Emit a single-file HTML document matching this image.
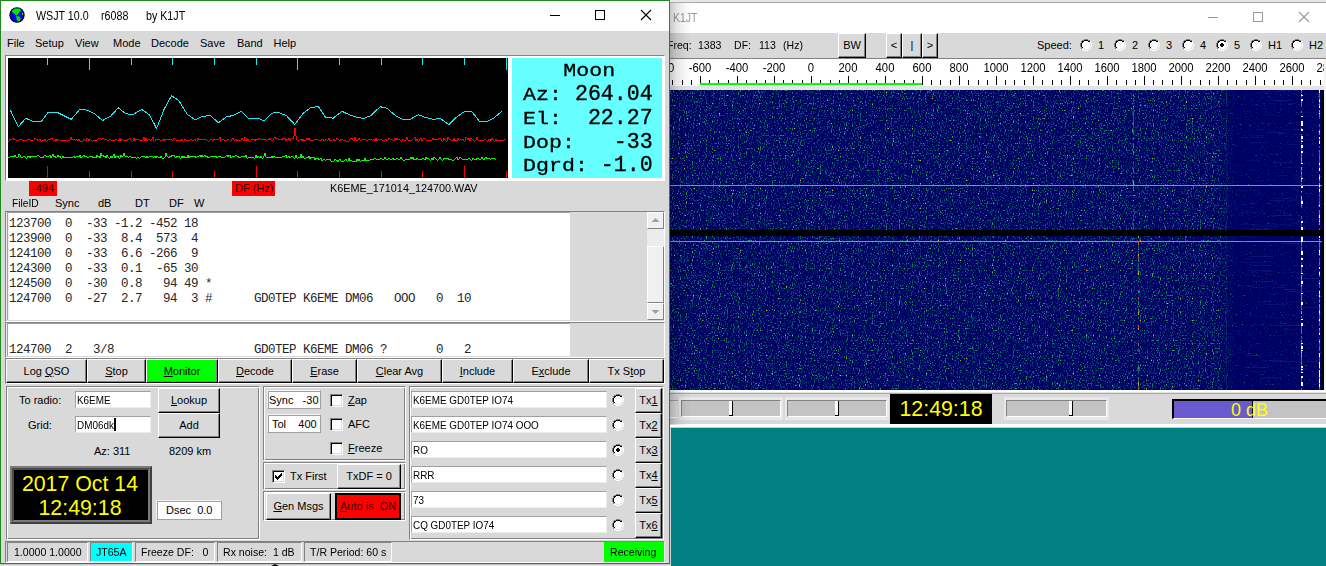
<!DOCTYPE html>
<html>
<head>
<meta charset="utf-8">
<title>WSJT</title>
<style>
*{box-sizing:border-box;margin:0;padding:0}
html,body{width:1326px;height:566px;overflow:hidden;background:#008080;font-family:"Liberation Sans",sans-serif;font-size:11px;color:#000}
.a{position:absolute}
.t{position:absolute;white-space:pre;line-height:14px;height:14px;font-size:11px}
.m{font-family:"Liberation Mono",monospace}
u{text-decoration:underline;text-underline-offset:1px}
.btn{position:absolute;background:#d9d9d9;border:1px solid;border-color:#fff #000 #000 #fff;box-shadow:inset -1px -1px 0 #828282;text-align:center;white-space:pre;font-size:11px}
.btn span{position:absolute;left:0;right:0;line-height:14px;height:14px}
.groove{position:absolute;border:1px solid;border-color:#828282 #fff #fff #828282;box-shadow:inset 1px 1px 0 #fff,inset -1px -1px 0 #828282}
.ent{position:absolute;background:#fff;border:1px solid;border-color:#a0a0a0 #ececec #ececec #a0a0a0;white-space:pre;font-size:11px}
.ent span{position:absolute;left:3px;line-height:14px;height:14px}
.cb{position:absolute;width:13px;height:13px;background:#fff;border:1px solid;border-color:#828282 #fff #fff #828282;box-shadow:inset 1px 1px 0 #000,inset -1px -1px 0 #d9d9d9}
.rb{position:absolute;width:12px;height:12px;overflow:hidden}.rb::before{content:"";position:absolute;left:-1px;top:-1px;width:1px;height:1px}.rb0::before{box-shadow:5px 1px 0 #808080,6px 1px 0 #808080,7px 1px 0 #808080,8px 1px 0 #808080,3px 2px 0 #808080,4px 2px 0 #808080,5px 2px 0 #000,6px 2px 0 #000,7px 2px 0 #000,8px 2px 0 #000,9px 2px 0 #808080,10px 2px 0 #808080,2px 3px 0 #808080,3px 3px 0 #000,4px 3px 0 #000,5px 3px 0 #fff,6px 3px 0 #fff,7px 3px 0 #fff,8px 3px 0 #fff,9px 3px 0 #000,10px 3px 0 #000,11px 3px 0 #fff,2px 4px 0 #808080,3px 4px 0 #000,4px 4px 0 #fff,5px 4px 0 #fff,6px 4px 0 #fff,7px 4px 0 #fff,8px 4px 0 #fff,9px 4px 0 #fff,10px 4px 0 #e3e3e3,11px 4px 0 #fff,1px 5px 0 #808080,2px 5px 0 #000,3px 5px 0 #fff,4px 5px 0 #fff,5px 5px 0 #fff,6px 5px 0 #fff,7px 5px 0 #fff,8px 5px 0 #fff,9px 5px 0 #fff,10px 5px 0 #fff,11px 5px 0 #e3e3e3,12px 5px 0 #fff,1px 6px 0 #808080,2px 6px 0 #000,3px 6px 0 #fff,4px 6px 0 #fff,5px 6px 0 #fff,6px 6px 0 #fff,7px 6px 0 #fff,8px 6px 0 #fff,9px 6px 0 #fff,10px 6px 0 #fff,11px 6px 0 #e3e3e3,12px 6px 0 #fff,1px 7px 0 #808080,2px 7px 0 #000,3px 7px 0 #fff,4px 7px 0 #fff,5px 7px 0 #fff,6px 7px 0 #fff,7px 7px 0 #fff,8px 7px 0 #fff,9px 7px 0 #fff,10px 7px 0 #fff,11px 7px 0 #e3e3e3,12px 7px 0 #fff,1px 8px 0 #808080,2px 8px 0 #000,3px 8px 0 #fff,4px 8px 0 #fff,5px 8px 0 #fff,6px 8px 0 #fff,7px 8px 0 #fff,8px 8px 0 #fff,9px 8px 0 #fff,10px 8px 0 #fff,11px 8px 0 #e3e3e3,12px 8px 0 #fff,2px 9px 0 #808080,3px 9px 0 #000,4px 9px 0 #fff,5px 9px 0 #fff,6px 9px 0 #fff,7px 9px 0 #fff,8px 9px 0 #fff,9px 9px 0 #fff,10px 9px 0 #e3e3e3,11px 9px 0 #fff,2px 10px 0 #808080,3px 10px 0 #e3e3e3,4px 10px 0 #e3e3e3,5px 10px 0 #fff,6px 10px 0 #fff,7px 10px 0 #fff,8px 10px 0 #fff,9px 10px 0 #e3e3e3,10px 10px 0 #e3e3e3,11px 10px 0 #fff,3px 11px 0 #fff,4px 11px 0 #fff,5px 11px 0 #e3e3e3,6px 11px 0 #e3e3e3,7px 11px 0 #e3e3e3,8px 11px 0 #e3e3e3,9px 11px 0 #fff,10px 11px 0 #fff,5px 12px 0 #fff,6px 12px 0 #fff,7px 12px 0 #fff,8px 12px 0 #fff}.rb1::before{box-shadow:5px 1px 0 #808080,6px 1px 0 #808080,7px 1px 0 #808080,8px 1px 0 #808080,3px 2px 0 #808080,4px 2px 0 #808080,5px 2px 0 #000,6px 2px 0 #000,7px 2px 0 #000,8px 2px 0 #000,9px 2px 0 #808080,10px 2px 0 #808080,2px 3px 0 #808080,3px 3px 0 #000,4px 3px 0 #000,5px 3px 0 #fff,6px 3px 0 #fff,7px 3px 0 #fff,8px 3px 0 #fff,9px 3px 0 #000,10px 3px 0 #000,11px 3px 0 #fff,2px 4px 0 #808080,3px 4px 0 #000,4px 4px 0 #fff,5px 4px 0 #fff,6px 4px 0 #fff,7px 4px 0 #fff,8px 4px 0 #fff,9px 4px 0 #fff,10px 4px 0 #e3e3e3,11px 4px 0 #fff,1px 5px 0 #808080,2px 5px 0 #000,3px 5px 0 #fff,4px 5px 0 #fff,5px 5px 0 #fff,6px 5px 0 #000,7px 5px 0 #000,8px 5px 0 #fff,9px 5px 0 #fff,10px 5px 0 #fff,11px 5px 0 #e3e3e3,12px 5px 0 #fff,1px 6px 0 #808080,2px 6px 0 #000,3px 6px 0 #fff,4px 6px 0 #fff,5px 6px 0 #000,6px 6px 0 #000,7px 6px 0 #000,8px 6px 0 #000,9px 6px 0 #fff,10px 6px 0 #fff,11px 6px 0 #e3e3e3,12px 6px 0 #fff,1px 7px 0 #808080,2px 7px 0 #000,3px 7px 0 #fff,4px 7px 0 #fff,5px 7px 0 #000,6px 7px 0 #000,7px 7px 0 #000,8px 7px 0 #000,9px 7px 0 #fff,10px 7px 0 #fff,11px 7px 0 #e3e3e3,12px 7px 0 #fff,1px 8px 0 #808080,2px 8px 0 #000,3px 8px 0 #fff,4px 8px 0 #fff,5px 8px 0 #fff,6px 8px 0 #000,7px 8px 0 #000,8px 8px 0 #fff,9px 8px 0 #fff,10px 8px 0 #fff,11px 8px 0 #e3e3e3,12px 8px 0 #fff,2px 9px 0 #808080,3px 9px 0 #000,4px 9px 0 #fff,5px 9px 0 #fff,6px 9px 0 #fff,7px 9px 0 #fff,8px 9px 0 #fff,9px 9px 0 #fff,10px 9px 0 #e3e3e3,11px 9px 0 #fff,2px 10px 0 #808080,3px 10px 0 #e3e3e3,4px 10px 0 #e3e3e3,5px 10px 0 #fff,6px 10px 0 #fff,7px 10px 0 #fff,8px 10px 0 #fff,9px 10px 0 #e3e3e3,10px 10px 0 #e3e3e3,11px 10px 0 #fff,3px 11px 0 #fff,4px 11px 0 #fff,5px 11px 0 #e3e3e3,6px 11px 0 #e3e3e3,7px 11px 0 #e3e3e3,8px 11px 0 #e3e3e3,9px 11px 0 #fff,10px 11px 0 #fff,5px 12px 0 #fff,6px 12px 0 #fff,7px 12px 0 #fff,8px 12px 0 #fff}
</style>
</head>
<body>
<div id="R" class="a" style="left:670px;top:0;width:656px;height:428px;background:#d9d9d9;overflow:hidden">
<div class="a" style="left:-670px;top:0;width:1326px;height:428px">
<div class="a" style="left:670px;top:0;width:656px;height:2px;background:#e6e6e6"></div>
<div class="a" style="left:670px;top:2px;width:656px;height:1px;background:#aaa"></div>
<div class="a" style="left:670px;top:3px;width:656px;height:30px;background:#fff"></div>
<div class="a" style="left:672.6px;top:11px;font-size:12px;line-height:15px;color:#999;white-space:pre;transform:scaleX(.87);transform-origin:0 0">K1JT</div>
<svg class="a" style="left:1200px;top:3px" width="126" height="30" viewBox="1200 3 126 30" shape-rendering="crispEdges"><rect x="1208" y="17" width="10" height="1" fill="#999"/><rect x="1253.5" y="12.5" width="9" height="9" fill="none" stroke="#999" stroke-width="1"/><g shape-rendering="geometricPrecision"><path d="M1299 12 L1309 22 M1309 12 L1299 22" stroke="#999" stroke-width="1.1" fill="none"/></g></svg>
<div class="t " style="left:667px;top:38px;transform:scaleX(.96);transform-origin:0 0">Freq:</div>
<div class="t " style="left:697.6px;top:38px;transform:scaleX(.96);transform-origin:0 0">1383</div>
<div class="t " style="left:733.6px;top:38px;transform:scaleX(.96);transform-origin:0 0">DF:</div>
<div class="t " style="left:758.8px;top:38px;transform:scaleX(.96);transform-origin:0 0">113</div>
<div class="t " style="left:783.2px;top:38px;transform:scaleX(.96);transform-origin:0 0">(Hz)</div>
<div class="btn" style="left:838px;top:33px;width:28px;height:25px;"><span style="top:4px">BW</span></div>
<div class="btn" style="left:886px;top:33px;width:16px;height:25px;"><span style="top:4px">&lt;</span></div>
<div class="btn" style="left:902px;top:33px;width:20px;height:25px;"><span style="top:4px">|</span></div>
<div class="btn" style="left:922px;top:33px;width:16px;height:25px;"><span style="top:4px">&gt;</span></div>
<div class="t " style="left:1037px;top:38px;">Speed:</div>
<i class="rb rb0" style="left:1080px;top:39px"></i>
<div class="t " style="left:1098px;top:38px;">1</div>
<i class="rb rb0" style="left:1114px;top:39px"></i>
<div class="t " style="left:1132px;top:38px;">2</div>
<i class="rb rb0" style="left:1148px;top:39px"></i>
<div class="t " style="left:1166px;top:38px;">3</div>
<i class="rb rb0" style="left:1182px;top:39px"></i>
<div class="t " style="left:1200px;top:38px;">4</div>
<i class="rb rb1" style="left:1216px;top:39px"></i>
<div class="t " style="left:1234px;top:38px;">5</div>
<i class="rb rb0" style="left:1250px;top:39px"></i>
<div class="t " style="left:1268px;top:38px;">H1</div>
<i class="rb rb0" style="left:1291px;top:39px"></i>
<div class="t " style="left:1309px;top:38px;">H2</div>
<div class="a" style="left:670px;top:58px;width:656px;height:1px;background:#828282"></div>
<div class="a" style="left:670px;top:59px;width:654px;height:27px;background:#fff"></div>
<div class="a" style="left:670px;top:86px;width:654px;height:4px;background:#e4e4e4"></div>
<svg class="a" style="left:670px;top:59px" width="656" height="31" viewBox="670 59 656 31" shape-rendering="crispEdges"><rect x="672" y="80" width="1" height="5" fill="#000"/><rect x="682" y="80" width="1" height="5" fill="#000"/><rect x="691" y="80" width="1" height="5" fill="#000"/><rect x="700" y="76" width="1" height="9" fill="#000"/><rect x="709" y="80" width="1" height="5" fill="#000"/><rect x="718" y="80" width="1" height="5" fill="#000"/><rect x="728" y="80" width="1" height="5" fill="#000"/><rect x="737" y="76" width="1" height="9" fill="#000"/><rect x="746" y="80" width="1" height="5" fill="#000"/><rect x="756" y="80" width="1" height="5" fill="#000"/><rect x="765" y="80" width="1" height="5" fill="#000"/><rect x="774" y="76" width="1" height="9" fill="#000"/><rect x="783" y="80" width="1" height="5" fill="#000"/><rect x="792" y="80" width="1" height="5" fill="#000"/><rect x="802" y="80" width="1" height="5" fill="#000"/><rect x="811" y="76" width="1" height="9" fill="#000"/><rect x="820" y="80" width="1" height="5" fill="#000"/><rect x="830" y="80" width="1" height="5" fill="#000"/><rect x="839" y="80" width="1" height="5" fill="#000"/><rect x="848" y="76" width="1" height="9" fill="#000"/><rect x="857" y="80" width="1" height="5" fill="#000"/><rect x="866" y="80" width="1" height="5" fill="#000"/><rect x="876" y="80" width="1" height="5" fill="#000"/><rect x="885" y="76" width="1" height="9" fill="#000"/><rect x="894" y="80" width="1" height="5" fill="#000"/><rect x="904" y="80" width="1" height="5" fill="#000"/><rect x="913" y="80" width="1" height="5" fill="#000"/><rect x="922" y="76" width="1" height="9" fill="#000"/><rect x="931" y="80" width="1" height="5" fill="#000"/><rect x="940" y="80" width="1" height="5" fill="#000"/><rect x="950" y="80" width="1" height="5" fill="#000"/><rect x="959" y="76" width="1" height="9" fill="#000"/><rect x="968" y="80" width="1" height="5" fill="#000"/><rect x="978" y="80" width="1" height="5" fill="#000"/><rect x="987" y="80" width="1" height="5" fill="#000"/><rect x="996" y="76" width="1" height="9" fill="#000"/><rect x="1005" y="80" width="1" height="5" fill="#000"/><rect x="1014" y="80" width="1" height="5" fill="#000"/><rect x="1024" y="80" width="1" height="5" fill="#000"/><rect x="1033" y="76" width="1" height="9" fill="#000"/><rect x="1042" y="80" width="1" height="5" fill="#000"/><rect x="1052" y="80" width="1" height="5" fill="#000"/><rect x="1061" y="80" width="1" height="5" fill="#000"/><rect x="1070" y="76" width="1" height="9" fill="#000"/><rect x="1079" y="80" width="1" height="5" fill="#000"/><rect x="1088" y="80" width="1" height="5" fill="#000"/><rect x="1098" y="80" width="1" height="5" fill="#000"/><rect x="1107" y="76" width="1" height="9" fill="#000"/><rect x="1116" y="80" width="1" height="5" fill="#000"/><rect x="1126" y="80" width="1" height="5" fill="#000"/><rect x="1135" y="80" width="1" height="5" fill="#000"/><rect x="1144" y="76" width="1" height="9" fill="#000"/><rect x="1153" y="80" width="1" height="5" fill="#000"/><rect x="1162" y="80" width="1" height="5" fill="#000"/><rect x="1172" y="80" width="1" height="5" fill="#000"/><rect x="1181" y="76" width="1" height="9" fill="#000"/><rect x="1190" y="80" width="1" height="5" fill="#000"/><rect x="1200" y="80" width="1" height="5" fill="#000"/><rect x="1209" y="80" width="1" height="5" fill="#000"/><rect x="1218" y="76" width="1" height="9" fill="#000"/><rect x="1227" y="80" width="1" height="5" fill="#000"/><rect x="1236" y="80" width="1" height="5" fill="#000"/><rect x="1246" y="80" width="1" height="5" fill="#000"/><rect x="1255" y="76" width="1" height="9" fill="#000"/><rect x="1264" y="80" width="1" height="5" fill="#000"/><rect x="1274" y="80" width="1" height="5" fill="#000"/><rect x="1283" y="80" width="1" height="5" fill="#000"/><rect x="1292" y="76" width="1" height="9" fill="#000"/><rect x="1301" y="80" width="1" height="5" fill="#000"/><rect x="1310" y="80" width="1" height="5" fill="#000"/><rect x="1320" y="80" width="1" height="5" fill="#000"/><rect x="700" y="83" width="222" height="2" fill="#0f0"/></svg>
<div class="a" style="left:633.3px;top:61px;width:60px;text-align:center;font-size:12px;line-height:15px;white-space:pre;transform:scaleX(.94)">-800</div>
<div class="a" style="left:670.3px;top:61px;width:60px;text-align:center;font-size:12px;line-height:15px;white-space:pre;transform:scaleX(.94)">-600</div>
<div class="a" style="left:707.3px;top:61px;width:60px;text-align:center;font-size:12px;line-height:15px;white-space:pre;transform:scaleX(.94)">-400</div>
<div class="a" style="left:744.3px;top:61px;width:60px;text-align:center;font-size:12px;line-height:15px;white-space:pre;transform:scaleX(.94)">-200</div>
<div class="a" style="left:781.3px;top:61px;width:60px;text-align:center;font-size:12px;line-height:15px;white-space:pre;transform:scaleX(.94)">0</div>
<div class="a" style="left:818.3px;top:61px;width:60px;text-align:center;font-size:12px;line-height:15px;white-space:pre;transform:scaleX(.94)">200</div>
<div class="a" style="left:855.3px;top:61px;width:60px;text-align:center;font-size:12px;line-height:15px;white-space:pre;transform:scaleX(.94)">400</div>
<div class="a" style="left:892.3px;top:61px;width:60px;text-align:center;font-size:12px;line-height:15px;white-space:pre;transform:scaleX(.94)">600</div>
<div class="a" style="left:929.3px;top:61px;width:60px;text-align:center;font-size:12px;line-height:15px;white-space:pre;transform:scaleX(.94)">800</div>
<div class="a" style="left:966.3px;top:61px;width:60px;text-align:center;font-size:12px;line-height:15px;white-space:pre;transform:scaleX(.94)">1000</div>
<div class="a" style="left:1003.3px;top:61px;width:60px;text-align:center;font-size:12px;line-height:15px;white-space:pre;transform:scaleX(.94)">1200</div>
<div class="a" style="left:1040.3px;top:61px;width:60px;text-align:center;font-size:12px;line-height:15px;white-space:pre;transform:scaleX(.94)">1400</div>
<div class="a" style="left:1077.3px;top:61px;width:60px;text-align:center;font-size:12px;line-height:15px;white-space:pre;transform:scaleX(.94)">1600</div>
<div class="a" style="left:1114.3px;top:61px;width:60px;text-align:center;font-size:12px;line-height:15px;white-space:pre;transform:scaleX(.94)">1800</div>
<div class="a" style="left:1151.3px;top:61px;width:60px;text-align:center;font-size:12px;line-height:15px;white-space:pre;transform:scaleX(.94)">2000</div>
<div class="a" style="left:1188.3px;top:61px;width:60px;text-align:center;font-size:12px;line-height:15px;white-space:pre;transform:scaleX(.94)">2200</div>
<div class="a" style="left:1225.3px;top:61px;width:60px;text-align:center;font-size:12px;line-height:15px;white-space:pre;transform:scaleX(.94)">2400</div>
<div class="a" style="left:1262.3px;top:61px;width:60px;text-align:center;font-size:12px;line-height:15px;white-space:pre;transform:scaleX(.94)">2600</div>
<div class="a" style="left:1299.3px;top:61px;width:60px;text-align:center;font-size:12px;line-height:15px;white-space:pre;transform:scaleX(.94)">2800</div>
<div class="a" style="left:670px;top:90px;width:652px;height:300px;background:#000064"></div>
<svg class="a" style="left:670px;top:90px" width="653" height="300" viewBox="0 0 653 300"><defs><filter id="nz" x="0" y="0" width="100%" height="100%" color-interpolation-filters="sRGB"><feTurbulence type="fractalNoise" baseFrequency="0.85 0.6" numOctaves="1" seed="3" result="hi"/><feColorMatrix in="hi" type="matrix" values="1 0 0 0 0  1 0 0 0 0  1 0 0 0 0  0 0 0 0 1" result="hi1"/><feTurbulence type="fractalNoise" baseFrequency="0.14 0.11" numOctaves="2" seed="21" result="lo"/><feColorMatrix in="lo" type="matrix" values="1 0 0 0 0  1 0 0 0 0  1 0 0 0 0  0 0 0 0 1" result="lo1"/><feComposite in="hi1" in2="lo1" operator="arithmetic" k1="0" k2="1" k3="0.16" k4="-0.08"/><feComponentTransfer><feFuncR type="table" tableValues="0.000 0.000 0.000 0.000 0.000 0.000 0.000 0.000 0.000 0.000 0.000 0.000 0.000 0.000 0.000 0.000 0.000 0.000 0.000 0.000 0.000 0.003 0.007 0.011 0.017 0.025 0.035 0.053 0.077 0.125 0.190 0.422 0.765 0.931 0.980 1.000 1.000 1.000 1.000 1.000 1.000"/><feFuncG type="table" tableValues="0.000 0.000 0.000 0.000 0.000 0.000 0.000 0.000 0.000 0.000 0.000 0.000 0.000 0.000 0.000 0.000 0.000 0.000 0.000 0.000 0.000 0.029 0.059 0.104 0.158 0.220 0.287 0.363 0.445 0.529 0.613 0.688 0.757 0.631 0.376 0.411 0.637 0.864 1.000 1.000 1.000"/><feFuncB type="table" tableValues="0.361 0.361 0.361 0.361 0.361 0.361 0.361 0.361 0.361 0.361 0.361 0.364 0.366 0.369 0.372 0.375 0.377 0.380 0.383 0.385 0.388 0.401 0.414 0.430 0.448 0.455 0.455 0.434 0.398 0.342 0.271 0.205 0.143 0.106 0.086 0.251 0.539 0.827 1.000 1.000 1.000"/></feComponentTransfer></filter><filter id="nz2" x="0" y="0" width="100%" height="100%" color-interpolation-filters="sRGB"><feTurbulence type="fractalNoise" baseFrequency="0.5 0.9" numOctaves="1" seed="8"/><feColorMatrix type="matrix" values="1 0 0 0 0  1 0 0 0 0  1 0 0 0 0  0 0 0 0 1"/><feComponentTransfer><feFuncR type="table" tableValues="0.000 0.000 0.000 0.000 0.000 0.000 0.000 0.000 0.000 0.000 0.000 0.000 0.000 0.000 0.000 0.000 0.000 0.000 0.000 0.000 0.000 0.000 0.000 0.000 0.000 0.001 0.004 0.007 0.013 0.020 0.029 0.044 0.059 0.132 0.206 0.426 0.745 1.000 1.000 1.000 1.000"/><feFuncG type="table" tableValues="0.000 0.000 0.000 0.000 0.000 0.000 0.000 0.000 0.000 0.000 0.000 0.000 0.000 0.000 0.000 0.000 0.000 0.000 0.000 0.000 0.000 0.000 0.000 0.000 0.000 0.005 0.027 0.050 0.089 0.131 0.190 0.271 0.353 0.484 0.614 0.750 0.889 1.000 1.000 1.000 1.000"/><feFuncB type="table" tableValues="0.376 0.376 0.376 0.376 0.376 0.376 0.376 0.376 0.376 0.376 0.376 0.376 0.376 0.378 0.380 0.382 0.384 0.386 0.388 0.389 0.391 0.393 0.395 0.397 0.399 0.405 0.431 0.458 0.478 0.498 0.497 0.464 0.431 0.350 0.268 0.426 0.745 1.000 1.000 1.000 1.000"/></feComponentTransfer></filter><linearGradient id="fg" x1="548" x2="566" y1="0" y2="0" gradientUnits="userSpaceOnUse"><stop offset="0" stop-color="#000"/><stop offset="0.35" stop-color="#666"/><stop offset="1" stop-color="#fff"/></linearGradient><mask id="fade" maskUnits="userSpaceOnUse" x="548" y="0" width="105" height="300"><rect x="548" y="0" width="105" height="300" fill="url(#fg)"/></mask></defs><rect x="0" y="0" width="566" height="300" filter="url(#nz)"/><g mask="url(#fade)"><rect x="548" y="0" width="105" height="300" filter="url(#nz2)"/></g></svg>
<div class="a" style="left:670px;top:185px;width:652px;height:1px;background:#8aa814"></div>
<div class="a" style="left:670px;top:241px;width:652px;height:1px;background:#8aa814"></div>
<svg class="a" style="left:670px;top:90px" width="653" height="300" viewBox="670 90 653 300" shape-rendering="crispEdges"><rect x="1133" y="94" width="1" height="2" fill="#e04020"/><rect x="1133" y="96" width="1" height="1" fill="#1a5f7a"/><rect x="1133" y="98" width="1" height="4" fill="#1a5f7a"/><rect x="1133" y="106" width="1" height="1" fill="#c8a028"/><rect x="1133" y="107" width="1" height="2" fill="#1f7a5a"/><rect x="1133" y="111" width="1" height="3" fill="#1a5f7a"/><rect x="1133" y="114" width="1" height="4" fill="#1a5f7a"/><rect x="1133" y="118" width="1" height="1" fill="#1a5f7a"/><rect x="1133" y="119" width="1" height="4" fill="#1a5f7a"/><rect x="1133" y="123" width="1" height="2" fill="#1f7a5a"/><rect x="1133" y="125" width="1" height="1" fill="#1a5f7a"/><rect x="1133" y="126" width="1" height="2" fill="#1a5f7a"/><rect x="1133" y="130" width="1" height="3" fill="#1a5f7a"/><rect x="1133" y="133" width="1" height="2" fill="#1a5f7a"/><rect x="1133" y="137" width="1" height="3" fill="#1f7a5a"/><rect x="1133" y="143" width="1" height="2" fill="#1a5f7a"/><rect x="1133" y="145" width="1" height="3" fill="#2a8f5f"/><rect x="1133" y="151" width="1" height="1" fill="#c8a028"/><rect x="1133" y="152" width="1" height="3" fill="#2a8f5f"/><rect x="1133" y="161" width="1" height="3" fill="#1a5f7a"/><rect x="1133" y="168" width="1" height="2" fill="#1f7a5a"/><rect x="1133" y="170" width="1" height="3" fill="#1f7a5a"/><rect x="1133" y="181" width="1" height="4" fill="#c8a028"/><rect x="1133" y="186" width="1" height="1" fill="#1a5f7a"/><rect x="1133" y="187" width="1" height="2" fill="#2a8f5f"/><rect x="1133" y="200" width="1" height="1" fill="#c8a028"/><rect x="1133" y="205" width="1" height="1" fill="#1a5f7a"/><rect x="1133" y="209" width="1" height="3" fill="#1a5f7a"/><rect x="1133" y="219" width="1" height="2" fill="#2a8f5f"/><rect x="1133" y="223" width="1" height="4" fill="#1a5f7a"/><rect x="1133" y="227" width="1" height="1" fill="#2a8f5f"/><rect x="1133" y="228" width="1" height="2" fill="#1f7a5a"/><rect x="1138" y="236" width="1" height="2" fill="#c8a028"/><rect x="1138" y="241" width="1" height="4" fill="#e04020"/><rect x="1138" y="245" width="1" height="4" fill="#1a5f7a"/><rect x="1138" y="249" width="1" height="1" fill="#e04020"/><rect x="1138" y="251" width="1" height="3" fill="#1a5f7a"/><rect x="1138" y="254" width="1" height="2" fill="#c8a028"/><rect x="1138" y="256" width="1" height="2" fill="#e04020"/><rect x="1138" y="258" width="1" height="4" fill="#2a8f5f"/><rect x="1138" y="264" width="1" height="3" fill="#1a5f7a"/><rect x="1138" y="268" width="1" height="3" fill="#1a5f7a"/><rect x="1138" y="271" width="1" height="4" fill="#c8a028"/><rect x="1138" y="291" width="1" height="2" fill="#2a8f5f"/><rect x="1138" y="297" width="1" height="2" fill="#e04020"/><rect x="1138" y="303" width="1" height="2" fill="#2a8f5f"/><rect x="1138" y="309" width="1" height="3" fill="#2a8f5f"/><rect x="1138" y="312" width="1" height="3" fill="#c8a028"/><rect x="1138" y="325" width="1" height="3" fill="#e04020"/><rect x="1138" y="328" width="1" height="2" fill="#c8a028"/><rect x="1138" y="343" width="1" height="3" fill="#e04020"/><rect x="1138" y="349" width="1" height="3" fill="#1a5f7a"/><rect x="1138" y="361" width="1" height="2" fill="#1a5f7a"/><rect x="1138" y="366" width="1" height="3" fill="#2a8f5f"/><rect x="1138" y="369" width="1" height="4" fill="#1a5f7a"/><rect x="1138" y="377" width="1" height="3" fill="#1f7a5a"/><rect x="1138" y="380" width="1" height="2" fill="#1a5f7a"/><rect x="1138" y="382" width="1" height="4" fill="#c8a028"/><rect x="1138" y="386" width="1" height="2" fill="#1a5f7a"/><rect x="1138" y="388" width="1" height="2" fill="#e04020"/><rect x="1301" y="90" width="1" height="1" fill="#d0a030"/><rect x="1301" y="91" width="1" height="1" fill="#187060"/><rect x="1301" y="92" width="1" height="1" fill="#187060"/><rect x="1301" y="94" width="1" height="1" fill="#d0a030"/><rect x="1301" y="95" width="2" height="1" fill="#fff"/><rect x="1301" y="96" width="1" height="1" fill="#e05020"/><rect x="1301" y="99" width="2" height="2" fill="#fff"/><rect x="1301" y="101" width="1" height="3" fill="#2a9a58"/><rect x="1301" y="104" width="1" height="3" fill="#1f8a50"/><rect x="1301" y="111" width="1" height="2" fill="#2a9a58"/><rect x="1301" y="116" width="2" height="1" fill="#fff"/><rect x="1301" y="121" width="2" height="3" fill="#fff"/><rect x="1301" y="124" width="2" height="2" fill="#fff"/><rect x="1301" y="128" width="1" height="1" fill="#e05020"/><rect x="1301" y="129" width="2" height="2" fill="#fff"/><rect x="1301" y="134" width="1" height="2" fill="#187060"/><rect x="1301" y="136" width="2" height="1" fill="#fff"/><rect x="1301" y="137" width="2" height="2" fill="#fff"/><rect x="1301" y="139" width="1" height="2" fill="#1f8a50"/><rect x="1301" y="141" width="2" height="1" fill="#fff"/><rect x="1301" y="143" width="1" height="1" fill="#e05020"/><rect x="1301" y="145" width="2" height="3" fill="#fff"/><rect x="1301" y="148" width="1" height="3" fill="#187060"/><rect x="1301" y="151" width="2" height="2" fill="#fff"/><rect x="1301" y="153" width="1" height="3" fill="#e05020"/><rect x="1301" y="156" width="1" height="2" fill="#e05020"/><rect x="1301" y="158" width="1" height="1" fill="#d0a030"/><rect x="1301" y="159" width="1" height="2" fill="#d0a030"/><rect x="1301" y="161" width="1" height="2" fill="#e05020"/><rect x="1301" y="163" width="2" height="1" fill="#fff"/><rect x="1301" y="167" width="1" height="2" fill="#d0a030"/><rect x="1301" y="169" width="1" height="2" fill="#e05020"/><rect x="1301" y="172" width="1" height="2" fill="#d0a030"/><rect x="1301" y="174" width="1" height="2" fill="#187060"/><rect x="1301" y="176" width="1" height="2" fill="#1f8a50"/><rect x="1301" y="178" width="2" height="1" fill="#fff"/><rect x="1301" y="179" width="1" height="3" fill="#d0a030"/><rect x="1301" y="183" width="1" height="1" fill="#187060"/><rect x="1301" y="184" width="1" height="2" fill="#1f8a50"/><rect x="1301" y="186" width="2" height="2" fill="#fff"/><rect x="1301" y="191" width="1" height="1" fill="#d0a030"/><rect x="1301" y="192" width="1" height="1" fill="#1f8a50"/><rect x="1301" y="196" width="1" height="2" fill="#d0a030"/><rect x="1301" y="198" width="1" height="3" fill="#d0a030"/><rect x="1301" y="201" width="2" height="3" fill="#fff"/><rect x="1301" y="204" width="1" height="3" fill="#2a9a58"/><rect x="1301" y="207" width="1" height="1" fill="#187060"/><rect x="1301" y="216" width="1" height="3" fill="#1f8a50"/><rect x="1301" y="221" width="2" height="2" fill="#fff"/><rect x="1301" y="223" width="1" height="3" fill="#187060"/><rect x="1301" y="226" width="1" height="1" fill="#1f8a50"/><rect x="1301" y="227" width="2" height="2" fill="#fff"/><rect x="1301" y="229" width="2" height="2" fill="#fff"/><rect x="1301" y="236" width="1" height="1" fill="#e05020"/><rect x="1301" y="237" width="2" height="2" fill="#fff"/><rect x="1301" y="239" width="2" height="3" fill="#fff"/><rect x="1301" y="242" width="1" height="2" fill="#e05020"/><rect x="1301" y="244" width="1" height="2" fill="#e05020"/><rect x="1301" y="247" width="1" height="2" fill="#2a9a58"/><rect x="1301" y="249" width="1" height="2" fill="#1f8a50"/><rect x="1301" y="251" width="2" height="2" fill="#fff"/><rect x="1301" y="253" width="2" height="2" fill="#fff"/><rect x="1301" y="257" width="1" height="1" fill="#187060"/><rect x="1301" y="258" width="2" height="2" fill="#fff"/><rect x="1301" y="262" width="1" height="3" fill="#187060"/><rect x="1301" y="265" width="2" height="2" fill="#fff"/><rect x="1301" y="267" width="1" height="3" fill="#1f8a50"/><rect x="1301" y="270" width="1" height="1" fill="#1f8a50"/><rect x="1301" y="271" width="1" height="2" fill="#2a9a58"/><rect x="1301" y="273" width="2" height="1" fill="#fff"/><rect x="1301" y="275" width="1" height="2" fill="#2a9a58"/><rect x="1301" y="277" width="1" height="2" fill="#d0a030"/><rect x="1301" y="279" width="1" height="1" fill="#2a9a58"/><rect x="1301" y="280" width="1" height="1" fill="#1f8a50"/><rect x="1301" y="281" width="2" height="3" fill="#fff"/><rect x="1301" y="284" width="1" height="1" fill="#187060"/><rect x="1301" y="285" width="1" height="2" fill="#d0a030"/><rect x="1301" y="287" width="1" height="1" fill="#187060"/><rect x="1301" y="288" width="1" height="3" fill="#187060"/><rect x="1301" y="291" width="1" height="2" fill="#187060"/><rect x="1301" y="293" width="2" height="1" fill="#fff"/><rect x="1301" y="294" width="1" height="1" fill="#1f8a50"/><rect x="1301" y="295" width="1" height="3" fill="#2a9a58"/><rect x="1301" y="298" width="1" height="2" fill="#2a9a58"/><rect x="1301" y="300" width="1" height="2" fill="#1f8a50"/><rect x="1301" y="302" width="2" height="3" fill="#fff"/><rect x="1301" y="305" width="1" height="1" fill="#e05020"/><rect x="1301" y="306" width="1" height="3" fill="#187060"/><rect x="1301" y="309" width="1" height="1" fill="#e05020"/><rect x="1301" y="311" width="1" height="3" fill="#d0a030"/><rect x="1301" y="316" width="1" height="2" fill="#1f8a50"/><rect x="1301" y="319" width="2" height="1" fill="#fff"/><rect x="1301" y="323" width="2" height="3" fill="#fff"/><rect x="1301" y="326" width="1" height="3" fill="#1f8a50"/><rect x="1301" y="329" width="1" height="2" fill="#2a9a58"/><rect x="1301" y="331" width="1" height="3" fill="#1f8a50"/><rect x="1301" y="336" width="1" height="3" fill="#187060"/><rect x="1301" y="340" width="1" height="2" fill="#e05020"/><rect x="1301" y="342" width="1" height="1" fill="#187060"/><rect x="1301" y="343" width="2" height="1" fill="#fff"/><rect x="1301" y="344" width="1" height="2" fill="#2a9a58"/><rect x="1301" y="346" width="2" height="3" fill="#fff"/><rect x="1301" y="349" width="1" height="1" fill="#2a9a58"/><rect x="1301" y="350" width="2" height="1" fill="#fff"/><rect x="1301" y="351" width="1" height="3" fill="#d0a030"/><rect x="1301" y="354" width="1" height="1" fill="#e05020"/><rect x="1301" y="355" width="1" height="2" fill="#d0a030"/><rect x="1301" y="357" width="1" height="2" fill="#2a9a58"/><rect x="1301" y="359" width="1" height="3" fill="#1f8a50"/><rect x="1301" y="362" width="1" height="3" fill="#e05020"/><rect x="1301" y="365" width="1" height="1" fill="#187060"/><rect x="1301" y="366" width="2" height="2" fill="#fff"/><rect x="1301" y="368" width="1" height="1" fill="#2a9a58"/><rect x="1301" y="369" width="2" height="1" fill="#fff"/><rect x="1301" y="370" width="1" height="2" fill="#1f8a50"/><rect x="1301" y="372" width="2" height="1" fill="#fff"/><rect x="1301" y="376" width="2" height="2" fill="#fff"/><rect x="1301" y="378" width="1" height="2" fill="#e05020"/><rect x="1301" y="380" width="1" height="2" fill="#187060"/><rect x="1301" y="382" width="2" height="2" fill="#fff"/><rect x="1301" y="384" width="2" height="2" fill="#fff"/><rect x="1301" y="388" width="1" height="3" fill="#1f8a50"/><rect x="1319" y="90" width="1" height="3" fill="#fff"/><rect x="1319" y="93" width="1" height="1" fill="#187060"/><rect x="1319" y="94" width="1" height="2" fill="#2a9a58"/><rect x="1319" y="96" width="1" height="1" fill="#1f8a50"/><rect x="1319" y="97" width="1" height="1" fill="#187060"/><rect x="1319" y="98" width="1" height="1" fill="#1f8a50"/><rect x="1319" y="99" width="1" height="1" fill="#d0a030"/><rect x="1319" y="100" width="1" height="2" fill="#fff"/><rect x="1319" y="102" width="1" height="2" fill="#1f8a50"/><rect x="1319" y="104" width="1" height="2" fill="#d0a030"/><rect x="1319" y="106" width="1" height="2" fill="#fff"/><rect x="1319" y="110" width="1" height="2" fill="#d0a030"/><rect x="1319" y="112" width="1" height="1" fill="#1f8a50"/><rect x="1319" y="113" width="1" height="1" fill="#fff"/><rect x="1319" y="114" width="1" height="1" fill="#2a9a58"/><rect x="1319" y="115" width="1" height="2" fill="#e05020"/><rect x="1319" y="117" width="1" height="2" fill="#187060"/><rect x="1319" y="124" width="1" height="1" fill="#1f8a50"/><rect x="1319" y="125" width="1" height="2" fill="#1f8a50"/><rect x="1319" y="129" width="1" height="2" fill="#1f8a50"/><rect x="1319" y="131" width="1" height="1" fill="#fff"/><rect x="1319" y="132" width="1" height="2" fill="#d0a030"/><rect x="1319" y="134" width="1" height="1" fill="#2a9a58"/><rect x="1319" y="137" width="1" height="2" fill="#fff"/><rect x="1319" y="139" width="1" height="1" fill="#187060"/><rect x="1319" y="140" width="1" height="1" fill="#1f8a50"/><rect x="1319" y="141" width="1" height="1" fill="#fff"/><rect x="1319" y="142" width="1" height="1" fill="#fff"/><rect x="1319" y="143" width="1" height="1" fill="#fff"/><rect x="1319" y="146" width="1" height="2" fill="#187060"/><rect x="1319" y="150" width="1" height="2" fill="#2a9a58"/><rect x="1319" y="152" width="1" height="2" fill="#187060"/><rect x="1319" y="154" width="1" height="1" fill="#187060"/><rect x="1319" y="155" width="1" height="1" fill="#1f8a50"/><rect x="1319" y="156" width="1" height="3" fill="#e05020"/><rect x="1319" y="159" width="1" height="2" fill="#1f8a50"/><rect x="1319" y="161" width="1" height="2" fill="#1f8a50"/><rect x="1319" y="163" width="1" height="2" fill="#fff"/><rect x="1319" y="165" width="1" height="2" fill="#187060"/><rect x="1319" y="167" width="1" height="1" fill="#1f8a50"/><rect x="1319" y="168" width="1" height="3" fill="#fff"/><rect x="1319" y="174" width="1" height="1" fill="#2a9a58"/><rect x="1319" y="175" width="1" height="1" fill="#d0a030"/><rect x="1319" y="176" width="1" height="1" fill="#d0a030"/><rect x="1319" y="177" width="1" height="1" fill="#fff"/><rect x="1319" y="178" width="1" height="1" fill="#fff"/><rect x="1319" y="179" width="1" height="1" fill="#d0a030"/><rect x="1319" y="180" width="1" height="2" fill="#1f8a50"/><rect x="1319" y="183" width="1" height="2" fill="#d0a030"/><rect x="1319" y="185" width="1" height="2" fill="#fff"/><rect x="1319" y="187" width="1" height="1" fill="#1f8a50"/><rect x="1319" y="188" width="1" height="1" fill="#187060"/><rect x="1319" y="189" width="1" height="3" fill="#fff"/><rect x="1319" y="192" width="1" height="2" fill="#1f8a50"/><rect x="1319" y="194" width="1" height="3" fill="#1f8a50"/><rect x="1319" y="198" width="1" height="1" fill="#2a9a58"/><rect x="1319" y="199" width="1" height="3" fill="#187060"/><rect x="1319" y="202" width="1" height="3" fill="#2a9a58"/><rect x="1319" y="205" width="1" height="1" fill="#fff"/><rect x="1319" y="206" width="1" height="1" fill="#d0a030"/><rect x="1319" y="210" width="1" height="2" fill="#e05020"/><rect x="1319" y="212" width="1" height="3" fill="#e05020"/><rect x="1319" y="215" width="1" height="3" fill="#fff"/><rect x="1319" y="218" width="1" height="1" fill="#1f8a50"/><rect x="1319" y="219" width="1" height="2" fill="#d0a030"/><rect x="1319" y="221" width="1" height="1" fill="#fff"/><rect x="1319" y="222" width="1" height="1" fill="#187060"/><rect x="1319" y="223" width="1" height="2" fill="#d0a030"/><rect x="1319" y="228" width="1" height="1" fill="#187060"/><rect x="1319" y="229" width="1" height="3" fill="#2a9a58"/><rect x="1319" y="236" width="1" height="2" fill="#fff"/><rect x="1319" y="239" width="1" height="1" fill="#d0a030"/><rect x="1319" y="240" width="1" height="1" fill="#1f8a50"/><rect x="1319" y="242" width="1" height="2" fill="#2a9a58"/><rect x="1319" y="244" width="1" height="1" fill="#e05020"/><rect x="1319" y="245" width="1" height="2" fill="#e05020"/><rect x="1319" y="247" width="1" height="3" fill="#1f8a50"/><rect x="1319" y="250" width="1" height="2" fill="#fff"/><rect x="1319" y="252" width="1" height="1" fill="#fff"/><rect x="1319" y="253" width="1" height="1" fill="#d0a030"/><rect x="1319" y="254" width="1" height="1" fill="#fff"/><rect x="1319" y="255" width="1" height="1" fill="#1f8a50"/><rect x="1319" y="258" width="1" height="1" fill="#e05020"/><rect x="1319" y="259" width="1" height="3" fill="#187060"/><rect x="1319" y="262" width="1" height="2" fill="#2a9a58"/><rect x="1319" y="264" width="1" height="2" fill="#187060"/><rect x="1319" y="267" width="1" height="2" fill="#fff"/><rect x="1319" y="271" width="1" height="1" fill="#2a9a58"/><rect x="1319" y="272" width="1" height="3" fill="#fff"/><rect x="1319" y="275" width="1" height="1" fill="#1f8a50"/><rect x="1319" y="276" width="1" height="1" fill="#1f8a50"/><rect x="1319" y="280" width="1" height="3" fill="#1f8a50"/><rect x="1319" y="283" width="1" height="1" fill="#fff"/><rect x="1319" y="284" width="1" height="2" fill="#187060"/><rect x="1319" y="286" width="1" height="2" fill="#1f8a50"/><rect x="1319" y="290" width="1" height="1" fill="#187060"/><rect x="1319" y="291" width="1" height="3" fill="#fff"/><rect x="1319" y="294" width="1" height="1" fill="#2a9a58"/><rect x="1319" y="295" width="1" height="2" fill="#fff"/><rect x="1319" y="297" width="1" height="3" fill="#187060"/><rect x="1319" y="300" width="1" height="1" fill="#d0a030"/><rect x="1319" y="301" width="1" height="2" fill="#e05020"/><rect x="1319" y="304" width="1" height="2" fill="#d0a030"/><rect x="1319" y="306" width="1" height="1" fill="#d0a030"/><rect x="1319" y="307" width="1" height="3" fill="#e05020"/><rect x="1319" y="310" width="1" height="1" fill="#d0a030"/><rect x="1319" y="311" width="1" height="1" fill="#fff"/><rect x="1319" y="312" width="1" height="1" fill="#fff"/><rect x="1319" y="313" width="1" height="2" fill="#d0a030"/><rect x="1319" y="315" width="1" height="3" fill="#1f8a50"/><rect x="1319" y="318" width="1" height="1" fill="#187060"/><rect x="1319" y="319" width="1" height="2" fill="#fff"/><rect x="1319" y="321" width="1" height="1" fill="#1f8a50"/><rect x="1319" y="322" width="1" height="1" fill="#1f8a50"/><rect x="1319" y="323" width="1" height="3" fill="#1f8a50"/><rect x="1319" y="328" width="1" height="2" fill="#d0a030"/><rect x="1319" y="330" width="1" height="1" fill="#1f8a50"/><rect x="1319" y="331" width="1" height="2" fill="#1f8a50"/><rect x="1319" y="333" width="1" height="2" fill="#fff"/><rect x="1319" y="339" width="1" height="2" fill="#1f8a50"/><rect x="1319" y="341" width="1" height="1" fill="#fff"/><rect x="1319" y="342" width="1" height="2" fill="#e05020"/><rect x="1319" y="344" width="1" height="2" fill="#187060"/><rect x="1319" y="346" width="1" height="1" fill="#1f8a50"/><rect x="1319" y="347" width="1" height="2" fill="#e05020"/><rect x="1319" y="349" width="1" height="1" fill="#2a9a58"/><rect x="1319" y="350" width="1" height="1" fill="#e05020"/><rect x="1319" y="353" width="1" height="2" fill="#fff"/><rect x="1319" y="355" width="1" height="2" fill="#fff"/><rect x="1319" y="357" width="1" height="3" fill="#2a9a58"/><rect x="1319" y="360" width="1" height="1" fill="#e05020"/><rect x="1319" y="361" width="1" height="1" fill="#2a9a58"/><rect x="1319" y="362" width="1" height="3" fill="#fff"/><rect x="1319" y="365" width="1" height="3" fill="#fff"/><rect x="1319" y="368" width="1" height="1" fill="#e05020"/><rect x="1319" y="370" width="1" height="1" fill="#fff"/><rect x="1319" y="371" width="1" height="2" fill="#fff"/><rect x="1319" y="373" width="1" height="2" fill="#fff"/><rect x="1319" y="375" width="1" height="2" fill="#fff"/><rect x="1319" y="377" width="1" height="2" fill="#d0a030"/><rect x="1319" y="379" width="1" height="3" fill="#fff"/><rect x="1319" y="382" width="1" height="1" fill="#fff"/><rect x="1319" y="383" width="1" height="1" fill="#e05020"/><rect x="1319" y="384" width="1" height="2" fill="#fff"/><rect x="1319" y="386" width="1" height="1" fill="#fff"/><rect x="1319" y="387" width="1" height="3" fill="#1f8a50"/><rect x="1245" y="236" width="5" height="1" fill="#2848b0" opacity="0.12" stroke-dasharray="2 1"/><rect x="1288" y="272" width="14" height="1" fill="#2848b0" opacity="0.12" stroke-dasharray="2 1"/><rect x="1245" y="210" width="6" height="1" fill="#2848b0" opacity="0.12" stroke-dasharray="2 1"/><rect x="1280" y="243" width="24" height="1" fill="#2848b0" opacity="0.25" stroke-dasharray="2 1"/><rect x="1262" y="377" width="20" height="1" fill="#2848b0" opacity="0.25" stroke-dasharray="2 1"/><rect x="1251" y="137" width="12" height="1" fill="#2848b0" opacity="0.18" stroke-dasharray="2 1"/><rect x="1290" y="368" width="17" height="1" fill="#2848b0" opacity="0.12" stroke-dasharray="2 1"/><rect x="1284" y="289" width="10" height="1" fill="#2848b0" opacity="0.25" stroke-dasharray="2 1"/><rect x="1262" y="360" width="24" height="1" fill="#2848b0" opacity="0.18" stroke-dasharray="2 1"/><rect x="1277" y="287" width="8" height="1" fill="#2848b0" opacity="0.25" stroke-dasharray="2 1"/><rect x="1283" y="373" width="12" height="1" fill="#2848b0" opacity="0.12" stroke-dasharray="2 1"/><rect x="1273" y="198" width="14" height="1" fill="#2848b0" opacity="0.18" stroke-dasharray="2 1"/><rect x="1257" y="129" width="7" height="1" fill="#2848b0" opacity="0.25" stroke-dasharray="2 1"/><rect x="1259" y="301" width="12" height="1" fill="#2848b0" opacity="0.25" stroke-dasharray="2 1"/><rect x="1288" y="122" width="18" height="1" fill="#2848b0" opacity="0.12" stroke-dasharray="2 1"/><rect x="1297" y="307" width="21" height="1" fill="#2848b0" opacity="0.25" stroke-dasharray="2 1"/><rect x="1274" y="215" width="18" height="1" fill="#2848b0" opacity="0.18" stroke-dasharray="2 1"/><rect x="1278" y="133" width="10" height="1" fill="#2848b0" opacity="0.18" stroke-dasharray="2 1"/><rect x="1255" y="105" width="8" height="1" fill="#2848b0" opacity="0.18" stroke-dasharray="2 1"/><rect x="1259" y="378" width="18" height="1" fill="#2848b0" opacity="0.12" stroke-dasharray="2 1"/><rect x="1249" y="256" width="25" height="1" fill="#2848b0" opacity="0.25" stroke-dasharray="2 1"/><rect x="1245" y="259" width="6" height="1" fill="#2848b0" opacity="0.18" stroke-dasharray="2 1"/><rect x="1245" y="160" width="15" height="1" fill="#2848b0" opacity="0.12" stroke-dasharray="2 1"/><rect x="1285" y="329" width="12" height="1" fill="#2848b0" opacity="0.25" stroke-dasharray="2 1"/><rect x="1248" y="334" width="5" height="1" fill="#2848b0" opacity="0.12" stroke-dasharray="2 1"/><rect x="1250" y="170" width="7" height="1" fill="#2848b0" opacity="0.18" stroke-dasharray="2 1"/><rect x="1283" y="167" width="24" height="1" fill="#2848b0" opacity="0.12" stroke-dasharray="2 1"/><rect x="1292" y="384" width="15" height="1" fill="#2848b0" opacity="0.12" stroke-dasharray="2 1"/><rect x="1249" y="371" width="16" height="1" fill="#2848b0" opacity="0.12" stroke-dasharray="2 1"/><rect x="1261" y="123" width="11" height="1" fill="#2848b0" opacity="0.18" stroke-dasharray="2 1"/><rect x="1258" y="281" width="19" height="1" fill="#2848b0" opacity="0.25" stroke-dasharray="2 1"/><rect x="1267" y="132" width="17" height="1" fill="#2848b0" opacity="0.25" stroke-dasharray="2 1"/><rect x="1284" y="328" width="5" height="1" fill="#2848b0" opacity="0.12" stroke-dasharray="2 1"/><rect x="1252" y="281" width="5" height="1" fill="#2848b0" opacity="0.18" stroke-dasharray="2 1"/><rect x="1279" y="285" width="7" height="1" fill="#2848b0" opacity="0.18" stroke-dasharray="2 1"/><rect x="1238" y="241" width="8" height="1" fill="#2848b0" opacity="0.18" stroke-dasharray="2 1"/><rect x="1261" y="271" width="15" height="1" fill="#2848b0" opacity="0.18" stroke-dasharray="2 1"/><rect x="1273" y="162" width="20" height="1" fill="#2848b0" opacity="0.25" stroke-dasharray="2 1"/><rect x="1250" y="135" width="14" height="1" fill="#2848b0" opacity="0.18" stroke-dasharray="2 1"/><rect x="1244" y="262" width="21" height="1" fill="#2848b0" opacity="0.18" stroke-dasharray="2 1"/><rect x="1264" y="115" width="18" height="1" fill="#2848b0" opacity="0.12" stroke-dasharray="2 1"/><rect x="1245" y="228" width="9" height="1" fill="#2848b0" opacity="0.18" stroke-dasharray="2 1"/><rect x="1297" y="139" width="18" height="1" fill="#2848b0" opacity="0.12" stroke-dasharray="2 1"/><rect x="1285" y="367" width="12" height="1" fill="#2848b0" opacity="0.12" stroke-dasharray="2 1"/><rect x="1281" y="321" width="9" height="1" fill="#2848b0" opacity="0.12" stroke-dasharray="2 1"/><rect x="1254" y="92" width="16" height="1" fill="#2848b0" opacity="0.12" stroke-dasharray="2 1"/><rect x="1268" y="100" width="22" height="1" fill="#2848b0" opacity="0.18" stroke-dasharray="2 1"/><rect x="1246" y="286" width="6" height="1" fill="#2848b0" opacity="0.12" stroke-dasharray="2 1"/><rect x="1292" y="189" width="5" height="1" fill="#2848b0" opacity="0.18" stroke-dasharray="2 1"/><rect x="1246" y="355" width="13" height="1" fill="#2848b0" opacity="0.25" stroke-dasharray="2 1"/><rect x="1238" y="330" width="6" height="1" fill="#2848b0" opacity="0.12" stroke-dasharray="2 1"/><rect x="1291" y="291" width="23" height="1" fill="#2848b0" opacity="0.25" stroke-dasharray="2 1"/><rect x="1263" y="108" width="5" height="1" fill="#2848b0" opacity="0.18" stroke-dasharray="2 1"/><rect x="1291" y="301" width="17" height="1" fill="#2848b0" opacity="0.12" stroke-dasharray="2 1"/><rect x="1279" y="175" width="9" height="1" fill="#2848b0" opacity="0.18" stroke-dasharray="2 1"/><rect x="1290" y="187" width="7" height="1" fill="#2848b0" opacity="0.18" stroke-dasharray="2 1"/><rect x="1286" y="200" width="18" height="1" fill="#2848b0" opacity="0.12" stroke-dasharray="2 1"/><rect x="1253" y="228" width="20" height="1" fill="#2848b0" opacity="0.18" stroke-dasharray="2 1"/><rect x="1236" y="236" width="25" height="1" fill="#2848b0" opacity="0.12" stroke-dasharray="2 1"/><rect x="1294" y="176" width="7" height="1" fill="#2848b0" opacity="0.12" stroke-dasharray="2 1"/><rect x="1240" y="285" width="18" height="1" fill="#2848b0" opacity="0.12" stroke-dasharray="2 1"/><rect x="1238" y="190" width="20" height="1" fill="#2848b0" opacity="0.18" stroke-dasharray="2 1"/><rect x="1253" y="324" width="19" height="1" fill="#2848b0" opacity="0.12" stroke-dasharray="2 1"/><rect x="1282" y="129" width="24" height="1" fill="#2848b0" opacity="0.12" stroke-dasharray="2 1"/><rect x="1259" y="97" width="18" height="1" fill="#2848b0" opacity="0.12" stroke-dasharray="2 1"/><rect x="1252" y="226" width="25" height="1" fill="#2848b0" opacity="0.18" stroke-dasharray="2 1"/><rect x="1263" y="261" width="9" height="1" fill="#2848b0" opacity="0.18" stroke-dasharray="2 1"/><rect x="1247" y="355" width="14" height="1" fill="#2848b0" opacity="0.12" stroke-dasharray="2 1"/><rect x="1287" y="144" width="16" height="1" fill="#2848b0" opacity="0.18" stroke-dasharray="2 1"/><rect x="1297" y="278" width="22" height="1" fill="#2848b0" opacity="0.25" stroke-dasharray="2 1"/><rect x="1266" y="317" width="23" height="1" fill="#2848b0" opacity="0.12" stroke-dasharray="2 1"/><rect x="1238" y="224" width="22" height="1" fill="#2848b0" opacity="0.12" stroke-dasharray="2 1"/><rect x="1253" y="287" width="12" height="1" fill="#2848b0" opacity="0.18" stroke-dasharray="2 1"/><rect x="1237" y="118" width="5" height="1" fill="#2848b0" opacity="0.12" stroke-dasharray="2 1"/><rect x="1265" y="304" width="21" height="1" fill="#2848b0" opacity="0.25" stroke-dasharray="2 1"/><rect x="1275" y="210" width="6" height="1" fill="#2848b0" opacity="0.25" stroke-dasharray="2 1"/><rect x="1240" y="212" width="17" height="1" fill="#2848b0" opacity="0.18" stroke-dasharray="2 1"/><rect x="1274" y="100" width="19" height="1" fill="#2848b0" opacity="0.18" stroke-dasharray="2 1"/><rect x="1251" y="142" width="16" height="1" fill="#2848b0" opacity="0.25" stroke-dasharray="2 1"/><rect x="1271" y="361" width="23" height="1" fill="#2848b0" opacity="0.25" stroke-dasharray="2 1"/><rect x="1284" y="289" width="14" height="1" fill="#2848b0" opacity="0.12" stroke-dasharray="2 1"/><rect x="1293" y="129" width="6" height="1" fill="#2848b0" opacity="0.25" stroke-dasharray="2 1"/><rect x="1285" y="198" width="8" height="1" fill="#2848b0" opacity="0.25" stroke-dasharray="2 1"/><rect x="1283" y="243" width="18" height="1" fill="#2848b0" opacity="0.12" stroke-dasharray="2 1"/><rect x="1280" y="323" width="7" height="1" fill="#2848b0" opacity="0.18" stroke-dasharray="2 1"/><rect x="1262" y="91" width="23" height="1" fill="#2848b0" opacity="0.18" stroke-dasharray="2 1"/><rect x="1243" y="111" width="7" height="1" fill="#2848b0" opacity="0.12" stroke-dasharray="2 1"/><rect x="1254" y="265" width="16" height="1" fill="#2848b0" opacity="0.18" stroke-dasharray="2 1"/><rect x="1271" y="224" width="20" height="1" fill="#2848b0" opacity="0.12" stroke-dasharray="2 1"/><rect x="1269" y="153" width="13" height="1" fill="#2848b0" opacity="0.12" stroke-dasharray="2 1"/><rect x="1285" y="219" width="10" height="1" fill="#2848b0" opacity="0.25" stroke-dasharray="2 1"/><rect x="1269" y="215" width="23" height="1" fill="#2848b0" opacity="0.18" stroke-dasharray="2 1"/><rect x="1253" y="180" width="23" height="1" fill="#2848b0" opacity="0.12" stroke-dasharray="2 1"/><rect x="1251" y="271" width="5" height="1" fill="#2848b0" opacity="0.18" stroke-dasharray="2 1"/><rect x="1299" y="112" width="22" height="1" fill="#2848b0" opacity="0.12" stroke-dasharray="2 1"/><rect x="1288" y="103" width="8" height="1" fill="#2848b0" opacity="0.18" stroke-dasharray="2 1"/><rect x="1292" y="361" width="24" height="1" fill="#2848b0" opacity="0.25" stroke-dasharray="2 1"/><rect x="1250" y="203" width="7" height="1" fill="#2848b0" opacity="0.25" stroke-dasharray="2 1"/><rect x="1241" y="137" width="7" height="1" fill="#2848b0" opacity="0.25" stroke-dasharray="2 1"/><rect x="1274" y="325" width="25" height="1" fill="#2848b0" opacity="0.25" stroke-dasharray="2 1"/><rect x="1244" y="367" width="25" height="1" fill="#2848b0" opacity="0.25" stroke-dasharray="2 1"/><rect x="1251" y="229" width="17" height="1" fill="#2848b0" opacity="0.18" stroke-dasharray="2 1"/><rect x="1294" y="222" width="14" height="1" fill="#2848b0" opacity="0.18" stroke-dasharray="2 1"/><rect x="1277" y="90" width="21" height="1" fill="#2848b0" opacity="0.25" stroke-dasharray="2 1"/><rect x="1295" y="344" width="17" height="1" fill="#2848b0" opacity="0.12" stroke-dasharray="2 1"/><rect x="1269" y="200" width="15" height="1" fill="#2848b0" opacity="0.25" stroke-dasharray="2 1"/><rect x="1294" y="195" width="7" height="1" fill="#2848b0" opacity="0.12" stroke-dasharray="2 1"/><rect x="1246" y="270" width="25" height="1" fill="#2848b0" opacity="0.18" stroke-dasharray="2 1"/><rect x="1226" y="90" width="1" height="300" fill="#2a8a5a" opacity="0.12"/></svg>
<div class="a" style="left:670px;top:230px;width:653px;height:6px;background:#000"></div>
<div class="a" style="left:1322px;top:90px;width:2px;height:300px;background:#000"></div>
<div class="a" style="left:1324px;top:59px;width:2px;height:333px;background:#f4f4f4"></div>
<div class="a" style="left:670px;top:390px;width:656px;height:2px;background:#fff"></div>
<div class="a" style="left:670px;top:392px;width:656px;height:1px;background:#e4e4e4"></div>
<div class="a" style="left:670px;top:393px;width:656px;height:1px;background:#a8a8a8"></div>
<div class="a" style="left:670px;top:400px;width:8px;height:18px;background:#dedede;border-top:1px solid #a0a0a0;border-bottom:1px solid #fff"></div>
<div class="a" style="left:679px;top:397px;width:104px;height:23px;background:#e8e8e8"></div>
<div class="a" style="left:681px;top:400px;width:100px;height:17px;background:#c3c3c3;border:1px solid;border-color:#828282 #fff #fff #828282"></div>
<div class="a" style="left:729px;top:401px;width:4px;height:15px;background:#fff;border-right:1px solid #000;border-bottom:1px solid #000"></div>
<div class="a" style="left:785px;top:397px;width:104px;height:23px;background:#e8e8e8"></div>
<div class="a" style="left:787px;top:400px;width:100px;height:17px;background:#c3c3c3;border:1px solid;border-color:#828282 #fff #fff #828282"></div>
<div class="a" style="left:835px;top:401px;width:4px;height:15px;background:#fff;border-right:1px solid #000;border-bottom:1px solid #000"></div>
<div class="a" style="left:1004px;top:397px;width:105px;height:23px;background:#e8e8e8"></div>
<div class="a" style="left:1006px;top:400px;width:101px;height:17px;background:#c3c3c3;border:1px solid;border-color:#828282 #fff #fff #828282"></div>
<div class="a" style="left:1069px;top:401px;width:4px;height:15px;background:#fff;border-right:1px solid #000;border-bottom:1px solid #000"></div>
<div class="a" style="left:890px;top:394px;width:102px;height:30px;background:#000"></div>
<div class="a" style="left:890px;top:397px;width:102px;height:24px;color:#ff0;font-size:21.33px;line-height:24px;text-align:center;white-space:pre">12:49:18</div>
<div class="a" style="left:1172px;top:399px;width:154px;height:20px;background:#c3c3c3;border-top:2px solid #000;border-left:2px solid #000;border-bottom:1px solid #fff"></div>
<div class="a" style="left:1174px;top:401px;width:78px;height:17px;background:#6a5acd"></div>
<div class="a" style="left:1252px;top:401px;width:1px;height:17px;background:#000"></div>
<div class="a" style="left:1231px;top:400px;font-size:18px;line-height:21px;color:#ff0;white-space:pre">0 dB</div>
<div class="a" style="left:670px;top:424px;width:656px;height:3px;background:#fff"></div>
<div class="a" style="left:670px;top:427px;width:656px;height:1px;background:#c8c8c8"></div>
<div class="a" style="left:670px;top:3px;width:22px;height:422px;background:linear-gradient(to right,rgba(0,0,0,.22),rgba(0,0,0,.10) 30%,rgba(0,0,0,.03) 70%,rgba(0,0,0,0))"></div>
</div></div>
<div class="a" style="left:670px;top:428px;width:1px;height:138px;background:#cfd8d8"></div>
<div class="a" style="left:0;top:564px;width:670px;height:1px;background:#c4c4c4"></div>
<div class="a" style="left:0;top:565px;width:670px;height:1px;background:#e4e4e4"></div>
<svg class="a" style="left:271px;top:564px" width="8" height="2" viewBox="0 0 8 2"><path d="M0 2 L4 0 L8 2Z" fill="#000"/></svg>
<div id="L" class="a" style="left:0;top:0;width:670px;height:564px;background:#d9d9d9;border:1px solid #1c8a1c;overflow:hidden">
<div class="a" style="left:-1px;top:-1px;width:670px;height:564px">
<div class="a" style="left:1px;top:1px;width:668px;height:30px;background:#fff"></div>
<svg class="a" style="left:9px;top:7px" width="16" height="16" viewBox="0 0 16 16"><circle cx="8" cy="8" r="7.7" fill="#000"/><circle cx="8" cy="8" r="6.7" fill="#0000f0"/><path d="M2.7 4 L5.8 1.6 L10.4 1.5 L12.2 3 L10.8 4.7 L9.5 6.6 L7.7 8.5 L5.8 7.2 L4 6 Z" fill="#00e800"/><path d="M7.1 8.5 L10.6 9.7 L11.8 11.5 L10.6 14 L8.9 14.4 L7.7 12.6 Z" fill="#00e800"/><path d="M13 5.5 L14.3 6.5 L14 8.5 L12.8 7.5 Z" fill="#00e800"/></svg>
<div class="a" style="left:35.8px;top:9px;font-size:12px;line-height:15px;white-space:pre;transform:scaleX(.89);transform-origin:0 0">WSJT 10.0</div>
<div class="a" style="left:100.5px;top:9px;font-size:12px;line-height:15px;white-space:pre;transform:scaleX(.89);transform-origin:0 0">r6088</div>
<div class="a" style="left:146.4px;top:9px;font-size:12px;line-height:15px;white-space:pre;transform:scaleX(.89);transform-origin:0 0">by K1JT</div>
<svg class="a" style="left:540px;top:1px" width="129" height="30" viewBox="0 0 129 30" shape-rendering="crispEdges"><rect x="10" y="14" width="10" height="1" fill="#000"/><rect x="55.5" y="9.5" width="9" height="9" fill="none" stroke="#000" stroke-width="1"/><g shape-rendering="geometricPrecision"><path d="M101 9 L111 19 M111 9 L101 19" stroke="#000" stroke-width="1.1" fill="none"/></g></svg>
<div class="t " style="left:7px;top:36px;">File</div>
<div class="t " style="left:35px;top:36px;">Setup</div>
<div class="t " style="left:75px;top:36px;">View</div>
<div class="t " style="left:113px;top:36px;">Mode</div>
<div class="t " style="left:151px;top:36px;">Decode</div>
<div class="t " style="left:200px;top:36px;">Save</div>
<div class="t " style="left:237px;top:36px;">Band</div>
<div class="t " style="left:273.5px;top:36px;">Help</div>
<div class="a" style="left:5px;top:55px;width:660px;height:126px;border:1px solid;border-color:#828282 #fff #fff #828282;background:#fff"></div>
<div class="a" style="left:8px;top:58px;width:500px;height:120px;background:#000"></div>
<div class="a" style="left:512px;top:58px;width:150px;height:120px;background:#6ff"></div>
<svg class="a" style="left:8px;top:58px" width="500" height="120" viewBox="8 58 500 120" shape-rendering="crispEdges">
<rect x="47" y="58" width="1" height="7" fill="#1fe9f5"/><rect x="47" y="166" width="1" height="12" fill="#f00"/><rect x="89" y="58" width="1" height="12" fill="#1fe9f5"/><rect x="89" y="171" width="1" height="7" fill="#f00"/><rect x="131" y="58" width="1" height="7" fill="#1fe9f5"/><rect x="131" y="171" width="1" height="7" fill="#f00"/><rect x="172" y="58" width="1" height="7" fill="#1fe9f5"/><rect x="172" y="171" width="1" height="7" fill="#f00"/><rect x="214" y="58" width="1" height="7" fill="#1fe9f5"/><rect x="214" y="171" width="1" height="7" fill="#f00"/><rect x="256" y="58" width="1" height="7" fill="#1fe9f5"/><rect x="256" y="166" width="1" height="12" fill="#f00"/><rect x="297" y="58" width="1" height="12" fill="#1fe9f5"/><rect x="297" y="171" width="1" height="7" fill="#f00"/><rect x="339" y="58" width="1" height="7" fill="#1fe9f5"/><rect x="339" y="171" width="1" height="7" fill="#f00"/><rect x="381" y="58" width="1" height="7" fill="#1fe9f5"/><rect x="381" y="171" width="1" height="7" fill="#f00"/><rect x="422" y="58" width="1" height="7" fill="#1fe9f5"/><rect x="422" y="171" width="1" height="7" fill="#f00"/><rect x="464" y="58" width="1" height="7" fill="#1fe9f5"/><rect x="464" y="166" width="1" height="12" fill="#f00"/><rect x="506" y="58" width="1" height="12" fill="#1fe9f5"/><rect x="506" y="171" width="1" height="7" fill="#f00"/><polyline fill="none" stroke="#1fe9f5" stroke-width="1" points="10.3,110.1 18.4,126.7 25.7,118.2 33.3,121.6 41.3,121.6 48.2,112.4 57.4,112.4 71.2,119.3 79.7,109.4 87.3,110.1 94.2,113.6 102.7,120.5 110.9,115.9 118.3,107.8 125.6,113.6 132.8,114.7 141.7,109.4 149.3,114.7 156.6,128.5 164.2,109.0 171.6,95.7 179.1,100.9 187.2,114.3 195.2,119.8 202.1,116.6 210.2,115.4 218.6,122.8 226.2,117.0 233.1,115.4 241.2,111.3 248.7,118.6 259.2,118.6 264.2,120.9 271.8,113.1 278.7,112.4 286.7,115.9 294.8,124.6 302.8,113.6 310.9,107.4 318.4,106.7 325.3,117.0 333.1,118.2 341.9,111.3 349.2,114.7 356.1,117.0 363.7,118.6 371.0,115.4 380.2,106.7 387.1,108.3 395.2,115.4 402.7,119.3 410.3,119.3 418.3,114.7 425.7,117.5 433.0,119.3 440.6,118.6 448.7,124.6 456.7,117.0 464.1,111.7 471.6,111.3 479.7,121.6 486.6,121.6 493.5,118.2 502.0,111.3"/>
<path d="M8 141h1v1h-1zM9 139h1v2h-1zM10 139h1v1h-1zM11 139h1v1h-1zM12 138h1v1h-1zM13 138h1v2h-1zM14 139h1v1h-1zM15 139h1v1h-1zM16 140h1v1h-1zM17 140h1v1h-1zM18 140h1v1h-1zM19 139h1v1h-1zM20 139h1v1h-1zM21 139h1v1h-1zM22 140h1v1h-1zM23 140h1v1h-1zM24 140h1v1h-1zM25 140h1v1h-1zM26 140h1v1h-1zM27 139h1v1h-1zM28 139h1v1h-1zM29 139h1v1h-1zM30 140h1v1h-1zM31 140h1v1h-1zM32 140h1v1h-1zM33 140h1v1h-1zM34 138h1v2h-1zM35 138h1v1h-1zM36 139h1v1h-1zM37 139h1v2h-1zM38 140h1v1h-1zM39 139h1v1h-1zM40 139h1v2h-1zM41 141h1v1h-1zM42 140h1v1h-1zM43 140h1v1h-1zM44 139h1v2h-1zM45 139h1v2h-1zM46 141h1v1h-1zM47 140h1v1h-1zM48 139h1v1h-1zM49 139h1v1h-1zM50 138h1v2h-1zM51 138h1v1h-1zM52 138h1v2h-1zM53 140h1v1h-1zM54 140h1v1h-1zM55 139h1v2h-1zM56 139h1v2h-1zM57 139h1v2h-1zM58 139h1v1h-1zM59 140h1v1h-1zM60 140h1v1h-1zM61 140h1v1h-1zM62 140h1v1h-1zM63 140h1v1h-1zM64 140h1v1h-1zM65 140h1v1h-1zM66 140h1v1h-1zM67 141h1v1h-1zM68 140h1v1h-1zM69 140h1v1h-1zM70 137h1v3h-1zM71 137h1v3h-1zM72 139h1v1h-1zM73 139h1v1h-1zM74 139h1v1h-1zM75 140h1v1h-1zM76 139h1v1h-1zM77 139h1v2h-1zM78 139h1v2h-1zM79 139h1v2h-1zM80 141h1v1h-1zM81 141h1v1h-1zM82 141h1v1h-1zM83 139h1v2h-1zM84 139h1v1h-1zM85 140h1v1h-1zM86 138h1v3h-1zM87 138h1v1h-1zM88 139h1v2h-1zM89 139h1v2h-1zM90 139h1v1h-1zM91 140h1v1h-1zM92 141h1v1h-1zM93 140h1v1h-1zM94 140h1v1h-1zM95 140h1v1h-1zM96 140h1v1h-1zM97 139h1v1h-1zM98 138h1v1h-1zM99 138h1v1h-1zM100 138h1v1h-1zM101 139h1v1h-1zM102 138h1v1h-1zM103 138h1v1h-1zM104 139h1v1h-1zM105 139h1v1h-1zM106 139h1v1h-1zM107 140h1v1h-1zM108 140h1v1h-1zM109 139h1v1h-1zM110 139h1v1h-1zM111 140h1v1h-1zM112 140h1v1h-1zM113 140h1v1h-1zM114 140h1v1h-1zM115 139h1v1h-1zM116 139h1v1h-1zM117 140h1v1h-1zM118 140h1v1h-1zM119 138h1v3h-1zM120 138h1v3h-1zM121 139h1v2h-1zM122 139h1v1h-1zM123 140h1v1h-1zM124 140h1v1h-1zM125 140h1v1h-1zM126 140h1v1h-1zM127 139h1v2h-1zM128 139h1v1h-1zM129 138h1v1h-1zM130 138h1v2h-1zM131 140h1v1h-1zM132 141h1v1h-1zM133 138h1v3h-1zM134 138h1v3h-1zM135 139h1v2h-1zM136 139h1v1h-1zM137 139h1v1h-1zM138 139h1v1h-1zM139 140h1v1h-1zM140 140h1v1h-1zM141 140h1v1h-1zM142 140h1v1h-1zM143 137h1v3h-1zM144 137h1v4h-1zM145 138h1v3h-1zM146 138h1v3h-1zM147 140h1v1h-1zM148 139h1v1h-1zM149 139h1v1h-1zM150 140h1v1h-1zM151 139h1v1h-1zM152 137h1v2h-1zM153 137h1v4h-1zM154 141h1v1h-1zM155 139h1v2h-1zM156 139h1v1h-1zM157 139h1v1h-1zM158 139h1v1h-1zM159 139h1v1h-1zM160 140h1v1h-1zM161 140h1v1h-1zM162 139h1v1h-1zM163 139h1v2h-1zM164 139h1v2h-1zM165 139h1v1h-1zM166 139h1v1h-1zM167 139h1v1h-1zM168 139h1v1h-1zM169 139h1v1h-1zM170 139h1v1h-1zM171 139h1v1h-1zM172 140h1v1h-1zM173 138h1v2h-1zM174 138h1v1h-1zM175 139h1v1h-1zM176 140h1v1h-1zM177 140h1v1h-1zM178 140h1v1h-1zM179 140h1v1h-1zM180 140h1v1h-1zM181 139h1v2h-1zM182 139h1v2h-1zM183 141h1v1h-1zM184 139h1v2h-1zM185 139h1v1h-1zM186 140h1v1h-1zM187 140h1v1h-1zM188 140h1v1h-1zM189 140h1v1h-1zM190 139h1v1h-1zM191 139h1v1h-1zM192 140h1v1h-1zM193 140h1v1h-1zM194 139h1v1h-1zM195 139h1v2h-1zM196 141h1v1h-1zM197 138h1v3h-1zM198 138h1v2h-1zM199 139h1v1h-1zM200 139h1v1h-1zM201 139h1v1h-1zM202 139h1v1h-1zM203 139h1v1h-1zM204 139h1v1h-1zM205 139h1v1h-1zM206 139h1v1h-1zM207 140h1v1h-1zM208 141h1v1h-1zM209 140h1v1h-1zM210 139h1v1h-1zM211 139h1v1h-1zM212 140h1v1h-1zM213 139h1v2h-1zM214 139h1v1h-1zM215 139h1v1h-1zM216 139h1v1h-1zM217 139h1v1h-1zM218 139h1v1h-1zM219 137h1v2h-1zM220 137h1v4h-1zM221 140h1v1h-1zM222 139h1v1h-1zM223 139h1v1h-1zM224 140h1v1h-1zM225 140h1v1h-1zM226 140h1v1h-1zM227 139h1v1h-1zM228 139h1v1h-1zM229 140h1v1h-1zM230 141h1v1h-1zM231 139h1v2h-1zM232 138h1v1h-1zM233 138h1v2h-1zM234 140h1v1h-1zM235 139h1v1h-1zM236 139h1v2h-1zM237 140h1v1h-1zM238 140h1v1h-1zM239 140h1v1h-1zM240 140h1v1h-1zM241 138h1v2h-1zM242 138h1v2h-1zM243 140h1v1h-1zM244 137h1v4h-1zM245 137h1v1h-1zM246 138h1v3h-1zM247 139h1v2h-1zM248 139h1v2h-1zM249 141h1v1h-1zM250 140h1v1h-1zM251 139h1v1h-1zM252 139h1v1h-1zM253 139h1v1h-1zM254 139h1v2h-1zM255 139h1v2h-1zM256 139h1v1h-1zM257 139h1v1h-1zM258 138h1v2h-1zM259 138h1v1h-1zM260 139h1v1h-1zM261 139h1v1h-1zM262 139h1v1h-1zM263 139h1v1h-1zM264 139h1v1h-1zM265 139h1v1h-1zM266 140h1v1h-1zM267 139h1v1h-1zM268 139h1v1h-1zM269 138h1v2h-1zM270 138h1v2h-1zM271 140h1v1h-1zM272 140h1v1h-1zM273 138h1v2h-1zM274 137h1v1h-1zM275 137h1v2h-1zM276 138h1v1h-1zM277 138h1v1h-1zM278 139h1v1h-1zM279 139h1v1h-1zM280 139h1v1h-1zM281 139h1v1h-1zM282 138h1v2h-1zM283 138h1v1h-1zM284 138h1v1h-1zM285 138h1v3h-1zM286 139h1v2h-1zM287 139h1v1h-1zM288 138h1v2h-1zM289 138h1v3h-1zM290 139h1v2h-1zM291 138h1v1h-1zM292 138h1v1h-1zM293 136h1v3h-1zM294 128h1v8h-1zM295 128h1v8h-1zM296 136h1v4h-1zM297 140h1v1h-1zM298 140h1v1h-1zM299 140h1v1h-1zM300 139h1v1h-1zM301 139h1v2h-1zM302 139h1v2h-1zM303 139h1v2h-1zM304 140h1v1h-1zM305 140h1v1h-1zM306 138h1v2h-1zM307 138h1v2h-1zM308 138h1v2h-1zM309 138h1v3h-1zM310 140h1v1h-1zM311 140h1v1h-1zM312 140h1v1h-1zM313 140h1v1h-1zM314 139h1v1h-1zM315 139h1v1h-1zM316 139h1v1h-1zM317 139h1v1h-1zM318 139h1v1h-1zM319 140h1v1h-1zM320 140h1v1h-1zM321 139h1v1h-1zM322 139h1v1h-1zM323 139h1v2h-1zM324 141h1v1h-1zM325 139h1v2h-1zM326 139h1v1h-1zM327 140h1v1h-1zM328 138h1v2h-1zM329 138h1v3h-1zM330 140h1v1h-1zM331 140h1v1h-1zM332 141h1v1h-1zM333 139h1v2h-1zM334 139h1v2h-1zM335 140h1v1h-1zM336 138h1v2h-1zM337 138h1v1h-1zM338 139h1v1h-1zM339 140h1v1h-1zM340 139h1v2h-1zM341 139h1v1h-1zM342 139h1v1h-1zM343 140h1v1h-1zM344 140h1v1h-1zM345 140h1v1h-1zM346 141h1v1h-1zM347 141h1v1h-1zM348 141h1v1h-1zM349 139h1v2h-1zM350 138h1v1h-1zM351 138h1v1h-1zM352 138h1v2h-1zM353 140h1v1h-1zM354 137h1v4h-1zM355 137h1v3h-1zM356 140h1v1h-1zM357 140h1v1h-1zM358 138h1v2h-1zM359 138h1v2h-1zM360 140h1v1h-1zM361 139h1v1h-1zM362 139h1v1h-1zM363 139h1v1h-1zM364 139h1v1h-1zM365 139h1v1h-1zM366 140h1v1h-1zM367 140h1v1h-1zM368 139h1v1h-1zM369 139h1v1h-1zM370 139h1v1h-1zM371 139h1v1h-1zM372 140h1v1h-1zM373 139h1v1h-1zM374 139h1v2h-1zM375 138h1v3h-1zM376 138h1v3h-1zM377 139h1v2h-1zM378 139h1v1h-1zM379 140h1v1h-1zM380 139h1v1h-1zM381 139h1v1h-1zM382 140h1v1h-1zM383 140h1v1h-1zM384 140h1v1h-1zM385 139h1v1h-1zM386 139h1v2h-1zM387 140h1v1h-1zM388 138h1v2h-1zM389 138h1v1h-1zM390 139h1v1h-1zM391 139h1v1h-1zM392 139h1v1h-1zM393 140h1v1h-1zM394 138h1v3h-1zM395 138h1v2h-1zM396 138h1v2h-1zM397 138h1v2h-1zM398 139h1v1h-1zM399 139h1v1h-1zM400 140h1v1h-1zM401 141h1v1h-1zM402 139h1v2h-1zM403 139h1v1h-1zM404 140h1v1h-1zM405 140h1v1h-1zM406 137h1v3h-1zM407 137h1v3h-1zM408 140h1v1h-1zM409 140h1v1h-1zM410 140h1v1h-1zM411 140h1v1h-1zM412 139h1v1h-1zM413 138h1v1h-1zM414 137h1v1h-1zM415 137h1v4h-1zM416 139h1v2h-1zM417 139h1v2h-1zM418 141h1v1h-1zM419 139h1v2h-1zM420 138h1v1h-1zM421 138h1v3h-1zM422 139h1v2h-1zM423 138h1v1h-1zM424 138h1v1h-1zM425 139h1v1h-1zM426 140h1v1h-1zM427 140h1v1h-1zM428 140h1v1h-1zM429 140h1v1h-1zM430 140h1v1h-1zM431 140h1v1h-1zM432 138h1v2h-1zM433 138h1v2h-1zM434 139h1v1h-1zM435 139h1v1h-1zM436 139h1v1h-1zM437 139h1v1h-1zM438 138h1v2h-1zM439 138h1v1h-1zM440 138h1v1h-1zM441 139h1v2h-1zM442 141h1v1h-1zM443 138h1v3h-1zM444 138h1v2h-1zM445 140h1v1h-1zM446 141h1v1h-1zM447 137h1v4h-1zM448 137h1v2h-1zM449 139h1v1h-1zM450 139h1v1h-1zM451 140h1v1h-1zM452 140h1v1h-1zM453 138h1v3h-1zM454 138h1v3h-1zM455 140h1v1h-1zM456 140h1v1h-1zM457 138h1v3h-1zM458 138h1v2h-1zM459 140h1v1h-1zM460 139h1v1h-1zM461 139h1v1h-1zM462 139h1v1h-1zM463 139h1v2h-1zM464 141h1v1h-1zM465 137h1v4h-1zM466 137h1v1h-1zM467 138h1v2h-1zM468 138h1v2h-1zM469 138h1v3h-1zM470 138h1v3h-1zM471 138h1v1h-1zM472 139h1v1h-1zM473 140h1v1h-1zM474 141h1v1h-1zM475 140h1v1h-1zM476 137h1v3h-1zM477 137h1v3h-1zM478 140h1v1h-1zM479 140h1v1h-1zM480 140h1v1h-1zM481 140h1v1h-1zM482 140h1v1h-1zM483 140h1v1h-1zM484 139h1v1h-1zM485 139h1v1h-1zM486 140h1v1h-1zM487 141h1v1h-1zM488 139h1v2h-1zM489 139h1v1h-1zM490 139h1v2h-1zM491 138h1v3h-1zM492 138h1v2h-1zM493 140h1v1h-1zM494 141h1v1h-1zM495 139h1v2h-1zM496 139h1v2h-1zM497 140h1v1h-1zM498 140h1v1h-1zM499 140h1v1h-1zM500 140h1v1h-1zM501 140h1v1h-1zM502 140h1v1h-1zM503 140h1v1h-1zM504 139h1v1h-1zM505 139h1v1h-1z" fill="#f00"/>
<path d="M8 157h1v1h-1zM9 157h1v1h-1zM10 156h1v1h-1zM11 156h1v1h-1zM12 156h1v1h-1zM13 156h1v1h-1zM14 155h1v2h-1zM15 155h1v2h-1zM16 157h1v1h-1zM17 157h1v1h-1zM18 154h1v3h-1zM19 154h1v1h-1zM20 155h1v2h-1zM21 157h1v1h-1zM22 157h1v1h-1zM23 156h1v1h-1zM24 156h1v1h-1zM25 157h1v1h-1zM26 158h1v1h-1zM27 156h1v2h-1zM28 156h1v1h-1zM29 156h1v2h-1zM30 156h1v2h-1zM31 156h1v1h-1zM32 156h1v1h-1zM33 156h1v1h-1zM34 156h1v1h-1zM35 156h1v1h-1zM36 156h1v1h-1zM37 155h1v1h-1zM38 155h1v1h-1zM39 156h1v1h-1zM40 157h1v1h-1zM41 157h1v1h-1zM42 157h1v1h-1zM43 156h1v2h-1zM44 155h1v1h-1zM45 155h1v1h-1zM46 156h1v1h-1zM47 156h1v1h-1zM48 156h1v1h-1zM49 155h1v1h-1zM50 155h1v3h-1zM51 156h1v2h-1zM52 154h1v2h-1zM53 154h1v3h-1zM54 156h1v1h-1zM55 156h1v2h-1zM56 157h1v1h-1zM57 155h1v2h-1zM58 155h1v2h-1zM59 156h1v1h-1zM60 156h1v2h-1zM61 158h1v1h-1zM62 156h1v2h-1zM63 156h1v2h-1zM64 157h1v1h-1zM65 157h1v1h-1zM66 157h1v1h-1zM67 157h1v1h-1zM68 157h1v1h-1zM69 157h1v1h-1zM70 157h1v1h-1zM71 157h1v1h-1zM72 157h1v1h-1zM73 156h1v1h-1zM74 156h1v2h-1zM75 157h1v1h-1zM76 156h1v1h-1zM77 156h1v1h-1zM78 156h1v1h-1zM79 155h1v2h-1zM80 155h1v3h-1zM81 157h1v1h-1zM82 156h1v1h-1zM83 155h1v1h-1zM84 155h1v2h-1zM85 156h1v1h-1zM86 156h1v1h-1zM87 157h1v1h-1zM88 157h1v1h-1zM89 156h1v1h-1zM90 156h1v1h-1zM91 156h1v1h-1zM92 156h1v2h-1zM93 157h1v1h-1zM94 157h1v1h-1zM95 157h1v1h-1zM96 155h1v3h-1zM97 155h1v2h-1zM98 156h1v1h-1zM99 156h1v2h-1zM100 153h1v5h-1zM101 153h1v3h-1zM102 155h1v1h-1zM103 155h1v2h-1zM104 156h1v1h-1zM105 156h1v2h-1zM106 155h1v3h-1zM107 155h1v2h-1zM108 157h1v1h-1zM109 158h1v1h-1zM110 156h1v2h-1zM111 156h1v2h-1zM112 156h1v2h-1zM113 154h1v2h-1zM114 154h1v4h-1zM115 156h1v2h-1zM116 156h1v1h-1zM117 156h1v1h-1zM118 156h1v2h-1zM119 158h1v1h-1zM120 155h1v3h-1zM121 155h1v2h-1zM122 156h1v1h-1zM123 153h1v3h-1zM124 153h1v3h-1zM125 156h1v1h-1zM126 156h1v1h-1zM127 156h1v1h-1zM128 157h1v1h-1zM129 156h1v1h-1zM130 156h1v1h-1zM131 157h1v1h-1zM132 157h1v1h-1zM133 157h1v1h-1zM134 157h1v1h-1zM135 157h1v1h-1zM136 158h1v1h-1zM137 157h1v1h-1zM138 157h1v1h-1zM139 158h1v1h-1zM140 157h1v1h-1zM141 156h1v1h-1zM142 156h1v1h-1zM143 156h1v1h-1zM144 156h1v1h-1zM145 157h1v1h-1zM146 156h1v2h-1zM147 156h1v2h-1zM148 157h1v1h-1zM149 156h1v1h-1zM150 156h1v1h-1zM151 156h1v1h-1zM152 156h1v1h-1zM153 157h1v1h-1zM154 156h1v1h-1zM155 156h1v2h-1zM156 156h1v2h-1zM157 156h1v1h-1zM158 157h1v1h-1zM159 157h1v1h-1zM160 156h1v2h-1zM161 156h1v2h-1zM162 158h1v1h-1zM163 158h1v1h-1zM164 157h1v1h-1zM165 153h1v4h-1zM166 153h1v3h-1zM167 156h1v1h-1zM168 157h1v1h-1zM169 156h1v2h-1zM170 156h1v1h-1zM171 155h1v2h-1zM172 155h1v1h-1zM173 155h1v1h-1zM174 155h1v2h-1zM175 157h1v1h-1zM176 156h1v2h-1zM177 156h1v1h-1zM178 156h1v1h-1zM179 156h1v2h-1zM180 158h1v1h-1zM181 156h1v2h-1zM182 156h1v2h-1zM183 156h1v2h-1zM184 156h1v2h-1zM185 157h1v1h-1zM186 157h1v1h-1zM187 155h1v3h-1zM188 155h1v3h-1zM189 156h1v2h-1zM190 156h1v1h-1zM191 156h1v1h-1zM192 156h1v1h-1zM193 156h1v1h-1zM194 156h1v1h-1zM195 156h1v2h-1zM196 157h1v1h-1zM197 156h1v1h-1zM198 156h1v1h-1zM199 155h1v1h-1zM200 155h1v2h-1zM201 155h1v2h-1zM202 155h1v2h-1zM203 156h1v1h-1zM204 155h1v1h-1zM205 155h1v2h-1zM206 156h1v1h-1zM207 156h1v2h-1zM208 157h1v1h-1zM209 157h1v1h-1zM210 156h1v1h-1zM211 156h1v1h-1zM212 156h1v1h-1zM213 156h1v1h-1zM214 156h1v1h-1zM215 156h1v1h-1zM216 156h1v2h-1zM217 157h1v1h-1zM218 156h1v1h-1zM219 156h1v1h-1zM220 156h1v1h-1zM221 157h1v1h-1zM222 157h1v1h-1zM223 157h1v1h-1zM224 157h1v1h-1zM225 156h1v1h-1zM226 155h1v1h-1zM227 155h1v2h-1zM228 155h1v2h-1zM229 155h1v1h-1zM230 155h1v3h-1zM231 157h1v1h-1zM232 156h1v1h-1zM233 156h1v1h-1zM234 156h1v1h-1zM235 155h1v1h-1zM236 155h1v1h-1zM237 156h1v1h-1zM238 156h1v2h-1zM239 157h1v1h-1zM240 157h1v1h-1zM241 156h1v1h-1zM242 156h1v1h-1zM243 156h1v1h-1zM244 156h1v1h-1zM245 155h1v2h-1zM246 155h1v3h-1zM247 158h1v1h-1zM248 157h1v1h-1zM249 157h1v1h-1zM250 157h1v1h-1zM251 157h1v1h-1zM252 157h1v1h-1zM253 157h1v1h-1zM254 158h1v1h-1zM255 155h1v3h-1zM256 155h1v3h-1zM257 156h1v2h-1zM258 156h1v1h-1zM259 157h1v1h-1zM260 156h1v2h-1zM261 156h1v2h-1zM262 158h1v1h-1zM263 156h1v2h-1zM264 153h1v3h-1zM265 153h1v4h-1zM266 157h1v1h-1zM267 157h1v1h-1zM268 157h1v1h-1zM269 157h1v1h-1zM270 157h1v1h-1zM271 156h1v2h-1zM272 156h1v2h-1zM273 156h1v2h-1zM274 156h1v1h-1zM275 157h1v1h-1zM276 157h1v1h-1zM277 157h1v1h-1zM278 157h1v1h-1zM279 157h1v1h-1zM280 157h1v1h-1zM281 157h1v1h-1zM282 156h1v1h-1zM283 156h1v1h-1zM284 156h1v1h-1zM285 155h1v1h-1zM286 155h1v3h-1zM287 157h1v1h-1zM288 156h1v1h-1zM289 156h1v2h-1zM290 157h1v1h-1zM291 156h1v1h-1zM292 156h1v1h-1zM293 157h1v1h-1zM294 158h1v1h-1zM295 155h1v3h-1zM296 155h1v3h-1zM297 158h1v1h-1zM298 157h1v1h-1zM299 157h1v1h-1zM300 154h1v4h-1zM301 154h1v4h-1zM302 156h1v2h-1zM303 156h1v2h-1zM304 158h1v1h-1zM305 158h1v1h-1zM306 157h1v1h-1zM307 157h1v1h-1zM308 156h1v2h-1zM309 156h1v3h-1zM310 157h1v2h-1zM311 157h1v1h-1zM312 157h1v1h-1zM313 157h1v1h-1zM314 157h1v3h-1zM315 158h1v2h-1zM316 158h1v1h-1zM317 158h1v1h-1zM318 158h1v2h-1zM319 159h1v1h-1zM320 158h1v1h-1zM321 158h1v3h-1zM322 160h1v1h-1zM323 159h1v1h-1zM324 159h1v1h-1zM325 160h1v1h-1zM326 159h1v1h-1zM327 159h1v1h-1zM328 159h1v1h-1zM329 159h1v1h-1zM330 159h1v2h-1zM331 161h1v1h-1zM332 161h1v1h-1zM333 161h1v1h-1zM334 159h1v2h-1zM335 159h1v1h-1zM336 160h1v1h-1zM337 160h1v2h-1zM338 160h1v2h-1zM339 159h1v1h-1zM340 159h1v2h-1zM341 161h1v1h-1zM342 161h1v1h-1zM343 161h1v1h-1zM344 160h1v1h-1zM345 159h1v1h-1zM346 159h1v2h-1zM347 161h1v1h-1zM348 158h1v3h-1zM349 158h1v3h-1zM350 160h1v1h-1zM351 160h1v1h-1zM352 161h1v1h-1zM353 161h1v1h-1zM354 161h1v1h-1zM355 161h1v1h-1zM356 159h1v3h-1zM357 159h1v2h-1zM358 159h1v2h-1zM359 159h1v2h-1zM360 161h1v1h-1zM361 160h1v1h-1zM362 160h1v1h-1zM363 160h1v1h-1zM364 158h1v3h-1zM365 158h1v3h-1zM366 160h1v1h-1zM367 160h1v1h-1zM368 160h1v1h-1zM369 160h1v1h-1zM370 159h1v1h-1zM371 159h1v1h-1zM372 159h1v1h-1zM373 159h1v1h-1zM374 158h1v1h-1zM375 158h1v1h-1zM376 159h1v1h-1zM377 159h1v1h-1zM378 159h1v1h-1zM379 159h1v1h-1zM380 158h1v1h-1zM381 158h1v1h-1zM382 159h1v1h-1zM383 159h1v1h-1zM384 157h1v2h-1zM385 157h1v2h-1zM386 159h1v1h-1zM387 159h1v1h-1zM388 158h1v1h-1zM389 158h1v1h-1zM390 159h1v1h-1zM391 159h1v1h-1zM392 158h1v1h-1zM393 158h1v2h-1zM394 159h1v1h-1zM395 159h1v1h-1zM396 158h1v1h-1zM397 158h1v1h-1zM398 159h1v1h-1zM399 159h1v1h-1zM400 157h1v2h-1zM401 157h1v2h-1zM402 159h1v1h-1zM403 160h1v1h-1zM404 160h1v1h-1zM405 159h1v1h-1zM406 159h1v1h-1zM407 159h1v1h-1zM408 159h1v1h-1zM409 159h1v1h-1zM410 157h1v2h-1zM411 157h1v2h-1zM412 157h1v2h-1zM413 157h1v3h-1zM414 159h1v1h-1zM415 159h1v1h-1zM416 158h1v2h-1zM417 158h1v1h-1zM418 159h1v1h-1zM419 159h1v1h-1zM420 159h1v1h-1zM421 159h1v1h-1zM422 158h1v1h-1zM423 158h1v1h-1zM424 159h1v1h-1zM425 157h1v3h-1zM426 157h1v2h-1zM427 158h1v1h-1zM428 158h1v1h-1zM429 159h1v1h-1zM430 160h1v1h-1zM431 158h1v2h-1zM432 158h1v2h-1zM433 157h1v3h-1zM434 157h1v1h-1zM435 158h1v1h-1zM436 159h1v1h-1zM437 160h1v1h-1zM438 159h1v1h-1zM439 157h1v2h-1zM440 157h1v2h-1zM441 159h1v1h-1zM442 160h1v1h-1zM443 158h1v2h-1zM444 158h1v1h-1zM445 158h1v1h-1zM446 158h1v1h-1zM447 158h1v1h-1zM448 158h1v2h-1zM449 159h1v1h-1zM450 159h1v1h-1zM451 159h1v1h-1zM452 160h1v1h-1zM453 160h1v1h-1zM454 159h1v1h-1zM455 158h1v1h-1zM456 157h1v1h-1zM457 157h1v3h-1zM458 159h1v1h-1zM459 157h1v2h-1zM460 157h1v1h-1zM461 158h1v1h-1zM462 159h1v1h-1zM463 159h1v1h-1zM464 159h1v1h-1zM465 159h1v1h-1zM466 159h1v1h-1zM467 159h1v1h-1zM468 158h1v1h-1zM469 158h1v1h-1zM470 159h1v1h-1zM471 160h1v1h-1zM472 158h1v2h-1zM473 158h1v1h-1zM474 159h1v1h-1zM475 159h1v1h-1zM476 158h1v2h-1zM477 158h1v1h-1zM478 158h1v1h-1zM479 159h1v1h-1zM480 159h1v1h-1zM481 157h1v2h-1zM482 157h1v2h-1zM483 159h1v1h-1zM484 158h1v2h-1zM485 157h1v1h-1zM486 157h1v2h-1zM487 158h1v1h-1zM488 158h1v1h-1zM489 158h1v1h-1zM490 159h1v1h-1zM491 158h1v1h-1zM492 158h1v1h-1zM493 158h1v1h-1zM494 158h1v1h-1zM495 159h1v1h-1z" fill="#0f0"/>
</svg>
<div class="a m" style="left:563.3px;top:56.5px;font-size:21.6px;line-height:26px;height:26px;white-space:pre;-webkit-text-stroke:0.35px #000;transform:scaleY(.84);transform-origin:0 20px">Moon</div>
<div class="a m" style="left:523.1px;top:80.6px;font-size:21.6px;line-height:26px;height:26px;white-space:pre;-webkit-text-stroke:0.35px #000;transform:scaleY(.84);transform-origin:0 20px">Az:</div>
<div class="a m" style="left:574.94px;top:80.6px;font-size:21.6px;line-height:26px;height:26px;white-space:pre;-webkit-text-stroke:0.35px #000;transform:scaleY(1.02);transform-origin:0 20px">264.04</div>
<div class="a m" style="left:523.1px;top:104.6px;font-size:21.6px;line-height:26px;height:26px;white-space:pre;-webkit-text-stroke:0.35px #000;transform:scaleY(.84);transform-origin:0 20px">El:</div>
<div class="a m" style="left:574.94px;top:104.6px;font-size:21.6px;line-height:26px;height:26px;white-space:pre;-webkit-text-stroke:0.35px #000;transform:scaleY(1.02);transform-origin:0 20px"> 22.27</div>
<div class="a m" style="left:523.1px;top:128.6px;font-size:21.6px;line-height:26px;height:26px;white-space:pre;-webkit-text-stroke:0.35px #000;transform:scaleY(.84);transform-origin:0 20px">Dop:</div>
<div class="a m" style="left:574.94px;top:128.6px;font-size:21.6px;line-height:26px;height:26px;white-space:pre;-webkit-text-stroke:0.35px #000;transform:scaleY(1.02);transform-origin:0 20px">   -33</div>
<div class="a m" style="left:523.1px;top:152.2px;font-size:21.6px;line-height:26px;height:26px;white-space:pre;-webkit-text-stroke:0.35px #000;transform:scaleY(.84);transform-origin:0 20px">Dgrd:</div>
<div class="a m" style="left:574.94px;top:152.2px;font-size:21.6px;line-height:26px;height:26px;white-space:pre;-webkit-text-stroke:0.35px #000;transform:scaleY(1.02);transform-origin:0 20px">  -1.0</div>
<div class="a" style="left:29px;top:181px;width:28px;height:15px;background:#f00"></div>
<div class="t " style="left:32px;top:181px;color:#300">-494</div>
<div class="a" style="left:232px;top:181px;width:43px;height:15px;background:#f00"></div>
<div class="t " style="left:235px;top:181px;color:#300">DF (Hz)</div>
<div class="t " style="left:330px;top:181px;transform:scaleX(.985);transform-origin:0 0">K6EME_171014_124700.WAV</div>
<div class="t " style="left:12px;top:196px;transform:scaleX(.93);transform-origin:0 0">FileID</div>
<div class="t " style="left:55px;top:196px;">Sync</div>
<div class="t " style="left:98px;top:196px;">dB</div>
<div class="t " style="left:135px;top:196px;">DT</div>
<div class="t " style="left:169px;top:196px;">DF</div>
<div class="t " style="left:194px;top:196px;">W</div>
<div class="a" style="left:5px;top:211px;width:660px;height:111px;border:1px solid;border-color:#828282 #fff #fff #828282;background:#d9d9d9"></div>
<div class="a" style="left:6px;top:212px;width:564px;height:108px;background:#fff;border-top:1px solid #a0a0a0;border-left:2px solid;border-left-color:#a0a0a0;box-shadow:inset 1px 0 0 #eee"></div>
<div class="a" style="left:6px;top:212px;width:1px;height:108px;background:#eee"></div>
<div class="a m" style="left:9px;top:217px;font-size:12.5px;letter-spacing:-0.5px;line-height:14px;height:14px;white-space:pre;color:#262626">123700  0  -33 -1.2 -452 18</div>
<div class="a m" style="left:9px;top:232px;font-size:12.5px;letter-spacing:-0.5px;line-height:14px;height:14px;white-space:pre;color:#262626">123900  0  -33  8.4  573  4</div>
<div class="a m" style="left:9px;top:247px;font-size:12.5px;letter-spacing:-0.5px;line-height:14px;height:14px;white-space:pre;color:#262626">124100  0  -33  6.6 -266  9</div>
<div class="a m" style="left:9px;top:262px;font-size:12.5px;letter-spacing:-0.5px;line-height:14px;height:14px;white-space:pre;color:#262626">124300  0  -33  0.1  -65 30</div>
<div class="a m" style="left:9px;top:277px;font-size:12.5px;letter-spacing:-0.5px;line-height:14px;height:14px;white-space:pre;color:#262626">124500  0  -30  0.8   94 49 *</div>
<div class="a m" style="left:9px;top:292px;font-size:12.5px;letter-spacing:-0.5px;line-height:14px;height:14px;white-space:pre;color:#262626">124700  0  -27  2.7   94  3 #      GD0TEP K6EME DM06   OOO   0  10</div>
<div class="a" style="left:647px;top:212px;width:17px;height:108px;background:#ececec"></div>
<div class="a" style="left:647px;top:212px;width:17px;height:17px;background:#f0f0f0;border:1px solid;border-color:#fff #828282 #828282 #fff"></div>
<svg class="a" style="left:651px;top:217px" width="9" height="6" viewBox="0 0 9 6"><path d="M0.5 5 L4.5 1 L8.5 5 Z" fill="#a0a0a0"/></svg>
<div class="a" style="left:647px;top:246px;width:17px;height:57px;background:#f0f0f0;border:1px solid;border-color:#fff #828282 #828282 #fff"></div>
<div class="a" style="left:647px;top:303px;width:17px;height:17px;background:#f0f0f0;border:1px solid;border-color:#fff #828282 #828282 #fff"></div>
<svg class="a" style="left:651px;top:309px" width="9" height="6" viewBox="0 0 9 6"><path d="M0.5 1 L4.5 5 L8.5 1 Z" fill="#a0a0a0"/></svg>
<div class="a" style="left:5px;top:322px;width:660px;height:36px;border:1px solid;border-color:#828282 #fff #fff #828282;background:#d9d9d9"></div>
<div class="a" style="left:6px;top:323px;width:564px;height:33px;background:#fff;border-top:1px solid #a0a0a0;border-left:2px solid #a0a0a0"></div>
<div class="a" style="left:6px;top:323px;width:1px;height:33px;background:#eee"></div>
<div class="a m" style="left:9px;top:343px;font-size:12.5px;letter-spacing:-0.5px;line-height:14px;height:14px;white-space:pre;color:#262626">124700  2   3/8                    GD0TEP K6EME DM06 ?       0   2</div>
<div class="a" style="left:5px;top:358px;width:660px;height:26px;border:1px solid;border-color:#828282 #fff #fff #828282"></div>
<div class="btn" style="left:6px;top:359px;width:81px;height:24px;"><span style="top:4px">Log <u>Q</u>SO</span></div>
<div class="btn" style="left:87px;top:359px;width:59px;height:24px;"><span style="top:4px"><u>S</u>top</span></div>
<div class="btn" style="left:146px;top:359px;width:72px;height:24px;background:#0f0;"><span style="top:4px"><u>M</u>onitor</span></div>
<div class="btn" style="left:218px;top:359px;width:74px;height:24px;"><span style="top:4px"><u>D</u>ecode</span></div>
<div class="btn" style="left:292px;top:359px;width:65px;height:24px;"><span style="top:4px"><u>E</u>rase</span></div>
<div class="btn" style="left:357px;top:359px;width:85px;height:24px;"><span style="top:4px"><u>C</u>lear Avg</span></div>
<div class="btn" style="left:442px;top:359px;width:71px;height:24px;"><span style="top:4px"><u>I</u>nclude</span></div>
<div class="btn" style="left:513px;top:359px;width:76px;height:24px;"><span style="top:4px">E<u>x</u>clude</span></div>
<div class="btn" style="left:589px;top:359px;width:75px;height:24px;"><span style="top:4px">Tx S<u>t</u>op</span></div>
<div class="groove" style="left:6px;top:386px;width:254px;height:154px"></div>
<div class="t " style="left:19px;top:393px;">To radio:</div>
<div class="ent" style="left:75px;top:391px;width:76px;height:17px;"><span style="top:1px;left:0.5px;transform:scaleX(.9);transform-origin:0 0">K6EME</span></div>
<div class="btn" style="left:158px;top:388px;width:62px;height:25px;"><span style="top:4px"><u>L</u>ookup</span></div>
<div class="t " style="left:28px;top:418px;">Grid:</div>
<div class="ent" style="left:75px;top:416px;width:76px;height:17px;"><span style="top:1px;left:0.5px;transform:scaleX(.9);transform-origin:0 0">DM06dk</span></div>
<div class="a" style="left:114px;top:418px;width:2px;height:13px;background:#000"></div>
<div class="btn" style="left:158px;top:413px;width:62px;height:25px;"><span style="top:4px">Add</span></div>
<div class="t " style="left:94px;top:444px;">Az: 311</div>
<div class="t " style="left:169px;top:444px;">8209 km</div>
<div class="a" style="left:10px;top:466px;width:142px;height:58px;border:2px solid;border-color:#7b7b7b #404040 #404040 #7b7b7b"><div style="width:138px;height:54px;background:#000;border:2px solid;border-color:#4a4a4a #7b7b7b #7b7b7b #4a4a4a"></div></div>
<div class="a" style="left:13px;top:471.6px;width:134px;height:24px;color:#ff0;font-size:21.33px;line-height:24px;text-align:center;white-space:pre">2017 Oct 14</div>
<div class="a" style="left:13px;top:495.6px;width:134px;height:24px;color:#ff0;font-size:21.33px;line-height:24px;text-align:center;white-space:pre">12:49:18</div>
<div class="a" style="left:156px;top:500px;width:66px;height:20px;background:#fff;border:1px solid;border-color:#f4f4f4 #a0a0a0 #a0a0a0 #f4f4f4;box-shadow:inset 1px 1px 0 #a0a0a0,inset -1px -1px 0 #fff"></div>
<div class="t " style="left:166px;top:503px;">Dsec  0.0</div>
<div class="groove" style="left:263px;top:386px;width:143px;height:75px"></div>
<div class="a" style="left:267px;top:390px;width:54px;height:19px;background:#fff;border:1px solid;border-color:#f4f4f4 #a0a0a0 #a0a0a0 #f4f4f4;box-shadow:inset 1px 1px 0 #a0a0a0,inset -1px -1px 0 #fff"></div>
<div class="t " style="left:269px;top:393px;">Sync   -30</div>
<div class="a" style="left:267px;top:414px;width:54px;height:19px;background:#fff;border:1px solid;border-color:#f4f4f4 #a0a0a0 #a0a0a0 #f4f4f4;box-shadow:inset 1px 1px 0 #a0a0a0,inset -1px -1px 0 #fff"></div>
<div class="t " style="left:272px;top:417px;">Tol    400</div>
<div class="cb" style="left:330px;top:394px"></div>
<div class="t " style="left:348px;top:393px;"><u>Z</u>ap</div>
<div class="cb" style="left:330px;top:418px"></div>
<div class="t " style="left:348px;top:417px;">AFC</div>
<div class="cb" style="left:330px;top:442px"></div>
<div class="t " style="left:348px;top:441px;"><u>F</u>reeze</div>
<div class="groove" style="left:263px;top:462px;width:143px;height:28px"></div>
<div class="cb" style="left:272px;top:470px"></div>
<svg class="a" style="left:275px;top:473px" width="7" height="7" viewBox="0 0 7 7" shape-rendering="crispEdges"><path d="M0 2h1v3h-1z M1 3h1v3h-1z M2 4h1v3h-1z M3 3h1v3h-1z M4 2h1v3h-1z M5 1h1v3h-1z M6 0h1v3h-1z" fill="#000"/></svg>
<div class="t " style="left:290px;top:469px;">Tx First</div>
<div class="btn" style="left:337px;top:464px;width:64px;height:25px;"><span style="top:4px">TxDF = 0</span></div>
<div class="groove" style="left:263px;top:491px;width:143px;height:30px"></div>
<div class="btn" style="left:266px;top:493px;width:65px;height:27px;"><span style="top:5px"><u>G</u>en Msgs</span></div>
<div class="a" style="left:335px;top:493px;width:66px;height:27px;background:#f00;border:2px solid #000"></div>
<div class="t " style="left:340px;top:499px;color:#300"><u>A</u>uto is  ON</div>
<div class="groove" style="left:409px;top:386px;width:255px;height:154px"></div>
<div class="ent" style="left:411px;top:391px;width:196px;height:17px;"><span style="top:1px;left:0.5px;transform:scaleX(.9);transform-origin:0 0">K6EME GD0TEP IO74</span></div>
<i class="rb rb0" style="left:612px;top:394px"></i>
<div class="btn" style="left:635px;top:388px;width:27px;height:25px;"><span style="top:4px">Tx<u>1</u></span></div>
<div class="ent" style="left:411px;top:416px;width:196px;height:17px;"><span style="top:1px;left:0.5px;transform:scaleX(.9);transform-origin:0 0">K6EME GD0TEP IO74 OOO</span></div>
<i class="rb rb0" style="left:612px;top:419px"></i>
<div class="btn" style="left:635px;top:413px;width:27px;height:25px;"><span style="top:4px">Tx<u>2</u></span></div>
<div class="ent" style="left:411px;top:441px;width:196px;height:17px;"><span style="top:1px;left:0.5px;transform:scaleX(.9);transform-origin:0 0">RO</span></div>
<i class="rb rb1" style="left:612px;top:444px"></i>
<div class="btn" style="left:635px;top:438px;width:27px;height:25px;"><span style="top:4px">Tx<u>3</u></span></div>
<div class="ent" style="left:411px;top:466px;width:196px;height:17px;"><span style="top:1px;left:0.5px;transform:scaleX(.9);transform-origin:0 0">RRR</span></div>
<i class="rb rb0" style="left:612px;top:469px"></i>
<div class="btn" style="left:635px;top:463px;width:27px;height:25px;"><span style="top:4px">Tx<u>4</u></span></div>
<div class="ent" style="left:411px;top:491px;width:196px;height:17px;"><span style="top:1px;left:0.5px;transform:scaleX(.9);transform-origin:0 0">73</span></div>
<i class="rb rb0" style="left:612px;top:494px"></i>
<div class="btn" style="left:635px;top:488px;width:27px;height:25px;"><span style="top:4px">Tx<u>5</u></span></div>
<div class="ent" style="left:411px;top:516px;width:196px;height:17px;"><span style="top:1px;left:0.5px;transform:scaleX(.9);transform-origin:0 0">CQ GD0TEP IO74</span></div>
<i class="rb rb0" style="left:612px;top:519px"></i>
<div class="btn" style="left:635px;top:513px;width:27px;height:25px;"><span style="top:4px">Tx<u>6</u></span></div>
<div class="a" style="left:5px;top:541px;width:660px;height:22px;border:1px solid;border-color:#828282 #fff #fff #828282"></div>
<div class="a" style="left:7px;top:542px;width:81px;height:20px;border:1px solid;border-color:#828282 #fff #fff #828282;"></div>
<div class="t " style="left:14px;top:545px;transform:scaleX(.96);transform-origin:0 0">1.0000 1.0000</div>
<div class="a" style="left:90px;top:542px;width:43px;height:20px;border:1px solid;border-color:#828282 #fff #fff #828282;background:#0ff;"></div>
<div class="t " style="left:96px;top:545px;transform:scaleX(.96);transform-origin:0 0">JT65A</div>
<div class="a" style="left:135px;top:542px;width:80px;height:20px;border:1px solid;border-color:#828282 #fff #fff #828282;"></div>
<div class="t " style="left:141px;top:545px;transform:scaleX(.96);transform-origin:0 0">Freeze DF:   0</div>
<div class="a" style="left:217px;top:542px;width:85px;height:20px;border:1px solid;border-color:#828282 #fff #fff #828282;"></div>
<div class="t " style="left:223px;top:545px;transform:scaleX(.96);transform-origin:0 0">Rx noise:  1 dB</div>
<div class="a" style="left:304px;top:542px;width:88px;height:20px;border:1px solid;border-color:#828282 #fff #fff #828282;"></div>
<div class="t " style="left:310px;top:545px;transform:scaleX(.96);transform-origin:0 0">T/R Period: 60 s</div>
<div class="a" style="left:604px;top:542px;width:60px;height:20px;background:#0f0;"></div>
<div class="t " style="left:610px;top:545px;transform:scaleX(.96);transform-origin:0 0">Receiving</div>
</div></div>
</body>
</html>
